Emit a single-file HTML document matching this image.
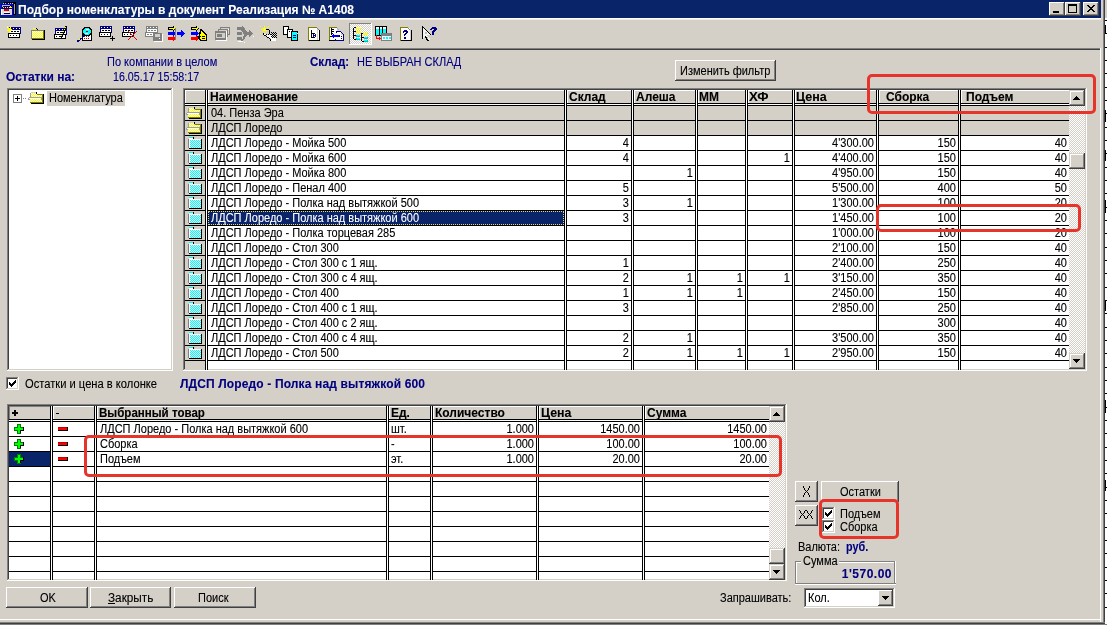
<!DOCTYPE html><html><head><meta charset="utf-8"><style>
html,body{margin:0;padding:0;}
body{width:1107px;height:625px;position:relative;overflow:hidden;background:#d4d0c8;font-family:"Liberation Sans",sans-serif;font-size:11px;}
body>div,body>svg{position:absolute;}
.t{position:absolute;filter:url(#dk);}
</style></head><body>
<div style="left:0px;top:0px;width:1107px;height:625px;background:#d4d0c8;"></div>
<div style="left:1105px;top:0px;width:2px;height:625px;background:#ffffff;"></div>
<div style="left:1105px;top:0px;width:2px;height:18px;background:#d4d0c8;"></div>
<div style="left:1105px;top:20px;width:2px;height:1px;background:#000000;"></div>
<div style="left:1105px;top:33px;width:2px;height:1px;background:#000000;"></div>
<div style="left:1105px;top:47px;width:2px;height:1px;background:#000000;"></div>
<div style="left:1105px;top:60px;width:2px;height:1px;background:#000000;"></div>
<div style="left:1105px;top:73px;width:2px;height:1px;background:#000000;"></div>
<div style="left:1105px;top:87px;width:2px;height:1px;background:#000000;"></div>
<div style="left:1105px;top:100px;width:2px;height:1px;background:#000000;"></div>
<div style="left:1105px;top:113px;width:2px;height:1px;background:#000000;"></div>
<div style="left:1105px;top:127px;width:2px;height:1px;background:#000000;"></div>
<div style="left:1105px;top:140px;width:2px;height:1px;background:#000000;"></div>
<div style="left:1105px;top:153px;width:2px;height:1px;background:#000000;"></div>
<div style="left:1105px;top:167px;width:2px;height:1px;background:#000000;"></div>
<div style="left:1105px;top:180px;width:2px;height:1px;background:#000000;"></div>
<div style="left:1105px;top:193px;width:2px;height:1px;background:#000000;"></div>
<div style="left:1105px;top:207px;width:2px;height:1px;background:#000000;"></div>
<div style="left:1105px;top:220px;width:2px;height:1px;background:#000000;"></div>
<div style="left:1105px;top:233px;width:2px;height:1px;background:#000000;"></div>
<div style="left:1105px;top:247px;width:2px;height:1px;background:#000000;"></div>
<div style="left:1105px;top:260px;width:2px;height:1px;background:#000000;"></div>
<div style="left:1105px;top:273px;width:2px;height:1px;background:#000000;"></div>
<div style="left:1105px;top:287px;width:2px;height:1px;background:#000000;"></div>
<div style="left:1105px;top:300px;width:2px;height:1px;background:#000000;"></div>
<div style="left:1105px;top:313px;width:2px;height:1px;background:#000000;"></div>
<div style="left:1105px;top:327px;width:2px;height:1px;background:#000000;"></div>
<div style="left:1105px;top:340px;width:2px;height:1px;background:#000000;"></div>
<div style="left:1105px;top:353px;width:2px;height:1px;background:#000000;"></div>
<div style="left:1105px;top:367px;width:2px;height:1px;background:#000000;"></div>
<div style="left:1105px;top:380px;width:2px;height:1px;background:#000000;"></div>
<div style="left:1105px;top:393px;width:2px;height:1px;background:#000000;"></div>
<div style="left:1105px;top:407px;width:2px;height:1px;background:#000000;"></div>
<div style="left:1105px;top:420px;width:2px;height:1px;background:#000000;"></div>
<div style="left:1105px;top:433px;width:2px;height:1px;background:#000000;"></div>
<div style="left:1105px;top:447px;width:2px;height:1px;background:#000000;"></div>
<div style="left:1105px;top:460px;width:2px;height:1px;background:#000000;"></div>
<div style="left:1105px;top:473px;width:2px;height:1px;background:#000000;"></div>
<div style="left:1105px;top:487px;width:2px;height:1px;background:#000000;"></div>
<div style="left:1105px;top:500px;width:2px;height:1px;background:#000000;"></div>
<div style="left:1105px;top:513px;width:2px;height:1px;background:#000000;"></div>
<div style="left:1105px;top:527px;width:2px;height:1px;background:#000000;"></div>
<div style="left:1105px;top:540px;width:2px;height:1px;background:#000000;"></div>
<div style="left:1105px;top:553px;width:2px;height:1px;background:#000000;"></div>
<div style="left:1105px;top:567px;width:2px;height:1px;background:#000000;"></div>
<div style="left:1105px;top:580px;width:2px;height:1px;background:#000000;"></div>
<div style="left:1105px;top:593px;width:2px;height:1px;background:#000000;"></div>
<div style="left:1105px;top:607px;width:2px;height:1px;background:#000000;"></div>
<div style="left:1105px;top:25px;width:1px;height:9px;background:#000000;"></div>
<div style="left:1105px;top:110px;width:1px;height:12px;background:#000000;"></div>
<div style="left:1105px;top:150px;width:1px;height:11px;background:#000000;"></div>
<div style="left:1105px;top:200px;width:1px;height:13px;background:#000000;"></div>
<div style="left:1105px;top:300px;width:1px;height:11px;background:#000000;"></div>
<div style="left:1105px;top:400px;width:1px;height:13px;background:#000000;"></div>
<div style="left:1105px;top:480px;width:1px;height:11px;background:#000000;"></div>
<div style="left:1103px;top:0px;width:1px;height:624px;background:#808080;"></div>
<div style="left:1104px;top:0px;width:1px;height:624px;background:#404040;"></div>
<div style="left:0px;top:622px;width:1105px;height:1px;background:#808080;"></div>
<div style="left:0px;top:623px;width:1105px;height:1px;background:#404040;"></div>
<div style="left:0px;top:624px;width:1107px;height:1px;background:#808080;"></div>
<div style="left:0px;top:0px;width:1101px;height:18px;background:#0a246a;"></div>
<div style="left:0px;top:18px;width:1101px;height:1px;background:#ffffff;"></div>
<div style="left:0px;top:19px;width:1101px;height:1px;background:#f0eeea;"></div>
<svg style="left:0px;top:0px" width="18" height="18" shape-rendering="crispEdges"><rect x="4" y="2" width="12" height="13" fill="#000"/><rect x="14" y="4" width="1" height="10" fill="#a0a0a0"/><rect x="3" y="3" width="11" height="1" fill="#000080"/><rect x="3" y="3" width="1" height="1" fill="#c0c0c0"/><rect x="5" y="3" width="1" height="1" fill="#c0c0c0"/><rect x="8" y="3" width="1" height="1" fill="#c0c0c0"/><rect x="10" y="3" width="1" height="1" fill="#c0c0c0"/><rect x="12" y="3" width="1" height="1" fill="#c0c0c0"/><rect x="1" y="4" width="12" height="12" fill="#0000ff"/><rect x="2" y="5" width="10" height="4" fill="#000080"/><rect x="2" y="5" width="8" height="1" fill="#c0c0c0"/><rect x="2" y="6" width="1" height="1" fill="#c0c0c0"/><rect x="3" y="7" width="1" height="1" fill="#ffff00"/><rect x="5" y="7" width="1" height="1" fill="#ffff00"/><rect x="7" y="7" width="1" height="1" fill="#ffff00"/><rect x="9" y="7" width="3" height="1" fill="#ffff00"/><rect x="10" y="6" width="1" height="1" fill="#ffff00"/><rect x="1" y="9" width="11" height="6" fill="#d8d8d8"/><rect x="1" y="9" width="1" height="6" fill="#ffffff"/><rect x="4" y="9" width="5" height="2" fill="#e00000"/><rect x="4" y="12" width="5" height="1" fill="#ffffff"/><rect x="4" y="13" width="6" height="1" fill="#000"/></svg>
<div class="t" style="left:18px;top:4px;font-size:12px;line-height:13px;color:#ffffff;white-space:pre;font-weight:bold;">Подбор номенклатуры в документ Реализация № А1408</div>
<div style="left:1049px;top:2px;width:16px;height:14px;background:#d4d0c8;"></div>
<div style="left:1049px;top:2px;width:16px;height:1px;background:#ffffff;"></div>
<div style="left:1049px;top:2px;width:1px;height:14px;background:#ffffff;"></div>
<div style="left:1049px;top:15px;width:16px;height:1px;background:#404040;"></div>
<div style="left:1064px;top:2px;width:1px;height:14px;background:#404040;"></div>
<div style="left:1050px;top:14px;width:14px;height:1px;background:#808080;"></div>
<div style="left:1063px;top:3px;width:1px;height:12px;background:#808080;"></div>
<div style="left:1065px;top:2px;width:16px;height:14px;background:#d4d0c8;"></div>
<div style="left:1065px;top:2px;width:16px;height:1px;background:#ffffff;"></div>
<div style="left:1065px;top:2px;width:1px;height:14px;background:#ffffff;"></div>
<div style="left:1065px;top:15px;width:16px;height:1px;background:#404040;"></div>
<div style="left:1080px;top:2px;width:1px;height:14px;background:#404040;"></div>
<div style="left:1066px;top:14px;width:14px;height:1px;background:#808080;"></div>
<div style="left:1079px;top:3px;width:1px;height:12px;background:#808080;"></div>
<div style="left:1083px;top:2px;width:16px;height:14px;background:#d4d0c8;"></div>
<div style="left:1083px;top:2px;width:16px;height:1px;background:#ffffff;"></div>
<div style="left:1083px;top:2px;width:1px;height:14px;background:#ffffff;"></div>
<div style="left:1083px;top:15px;width:16px;height:1px;background:#404040;"></div>
<div style="left:1098px;top:2px;width:1px;height:14px;background:#404040;"></div>
<div style="left:1084px;top:14px;width:14px;height:1px;background:#808080;"></div>
<div style="left:1097px;top:3px;width:1px;height:12px;background:#808080;"></div>
<div style="left:1053px;top:11px;width:6px;height:2px;background:#000000;"></div>
<div style="left:1068px;top:4px;width:9px;height:9px;background:#000000;"></div>
<div style="left:1069px;top:6px;width:7px;height:6px;background:#d4d0c8;"></div>
<svg style="left:1083px;top:2px" width="16" height="14" shape-rendering="crispEdges"><path d="M4 3h2v1h1v1h2v-1h1v-1h2v1h-1v1h-1v1h-1v1h1v1h1v1h1v1h-2v-1h-1v-1h-2v1h-1v1h-2v-1h1v-1h1v-1h1v-1h-1v-1h-1v-1h-1z" fill="#000"/></svg>
<div style="left:0px;top:48px;width:1100px;height:1px;background:#808080;"></div>
<div style="left:0px;top:49px;width:1100px;height:1px;background:#404040;"></div>
<div style="left:1100px;top:48px;width:1px;height:574px;background:#ffffff;"></div>
<div style="left:0px;top:619px;width:1101px;height:1px;background:#ffffff;"></div>
<div class="t" style="left:107px;top:56px;font-size:12px;line-height:13px;color:#000080;white-space:pre;transform:scaleX(0.9167);transform-origin:0 0;">По компании в целом</div>
<div class="t" style="left:113px;top:71px;font-size:12px;line-height:13px;color:#000080;white-space:pre;transform:scaleX(0.89);transform-origin:0 0;">16.05.17 15:58:17</div>
<div class="t" style="left:6px;top:71px;font-size:12px;line-height:13px;color:#000080;white-space:pre;font-weight:bold;">Остатки на:</div>
<div class="t" style="left:310px;top:56px;font-size:12px;line-height:13px;color:#000080;white-space:pre;font-weight:bold;transform:scaleX(0.96);transform-origin:0 0;">Склад:</div>
<div class="t" style="left:357px;top:56px;font-size:12px;line-height:13px;color:#000080;white-space:pre;transform:scaleX(0.9167);transform-origin:0 0;">НЕ ВЫБРАН СКЛАД</div>
<div style="left:675px;top:60px;width:101px;height:21px;background:#d4d0c8;"></div>
<div style="left:675px;top:60px;width:101px;height:1px;background:#ffffff;"></div>
<div style="left:675px;top:60px;width:1px;height:21px;background:#ffffff;"></div>
<div style="left:675px;top:80px;width:101px;height:1px;background:#404040;"></div>
<div style="left:775px;top:60px;width:1px;height:21px;background:#404040;"></div>
<div style="left:676px;top:79px;width:99px;height:1px;background:#808080;"></div>
<div style="left:774px;top:61px;width:1px;height:19px;background:#808080;"></div>
<div class="t" style="left:680px;top:65px;font-size:12px;line-height:13px;color:#000;white-space:pre;transform:scaleX(0.9167);transform-origin:0 0;">Изменить фильтр</div>
<div style="left:7px;top:88px;width:166px;height:283px;background:#ffffff;"></div>
<div style="left:7px;top:88px;width:166px;height:1px;background:#808080;"></div>
<div style="left:7px;top:88px;width:1px;height:283px;background:#808080;"></div>
<div style="left:8px;top:89px;width:164px;height:1px;background:#404040;"></div>
<div style="left:8px;top:89px;width:1px;height:281px;background:#404040;"></div>
<div style="left:7px;top:370px;width:166px;height:1px;background:#ffffff;"></div>
<div style="left:172px;top:88px;width:1px;height:283px;background:#ffffff;"></div>
<div style="left:8px;top:369px;width:164px;height:1px;background:#d4d0c8;"></div>
<div style="left:171px;top:89px;width:1px;height:281px;background:#d4d0c8;"></div>
<div style="left:13px;top:94px;width:9px;height:9px;background:#808080;"></div>
<div style="left:14px;top:95px;width:7px;height:7px;background:#ffffff;"></div>
<div style="left:15px;top:98px;width:5px;height:1px;background:#000000;"></div>
<div style="left:17px;top:96px;width:1px;height:5px;background:#000000;"></div>
<div style="left:23px;top:98px;width:1px;height:1px;background:#808080;"></div>
<div style="left:25px;top:98px;width:1px;height:1px;background:#808080;"></div>
<div style="left:47px;top:91px;width:78px;height:15px;background:#d4d0c8;"></div>
<div class="t" style="left:49px;top:92px;font-size:12px;line-height:13px;color:#000;white-space:pre;transform:scaleX(0.9167);transform-origin:0 0;">Номенклатура</div>
<svg width="0" height="0" style="position:absolute;left:0;top:0">
<defs>
<filter id="dk" x="-2%" y="-10%" width="104%" height="120%"><feComponentTransfer><feFuncA type="gamma" amplitude="1" exponent="0.8" offset="0"/></feComponentTransfer></filter>
<pattern id="chk" width="2" height="2" patternUnits="userSpaceOnUse"><rect width="2" height="2" fill="#d4d0c8"/><rect width="1" height="1" fill="#ffffff"/><rect x="1" y="1" width="1" height="1" fill="#ffffff"/></pattern>
<pattern id="cy" width="2" height="2" patternUnits="userSpaceOnUse"><rect width="2" height="2" fill="#f0e8ea"/><rect width="1" height="1" fill="#00ffff"/><rect x="1" y="1" width="1" height="1" fill="#00ffff"/></pattern>
<pattern id="yl" width="2" height="2" patternUnits="userSpaceOnUse"><rect width="2" height="2" fill="#ffffff"/><rect width="1" height="1" fill="#ffff00"/><rect x="1" y="1" width="1" height="1" fill="#ffff00"/></pattern>
<symbol id="fc" viewBox="0 0 16 14">
<rect x="3" y="1" width="4" height="1" fill="#00ffff"/><rect x="7" y="1" width="1" height="2" fill="#000"/>
<rect x="2" y="3" width="1" height="9" fill="#808080"/>
<rect x="3" y="2" width="4" height="1" fill="#ffffff"/>
<rect x="3" y="3" width="12" height="1" fill="#ffffff"/>
<rect x="3" y="4" width="1" height="8" fill="#ffffff"/>
<rect x="4" y="4" width="11" height="8" fill="url(#cy)"/>
<rect x="15" y="3" width="1" height="10" fill="#000"/>
<rect x="3" y="12" width="13" height="1" fill="#000"/>
</symbol>
<symbol id="fy" viewBox="0 0 16 14">
<rect x="3" y="1" width="5" height="1" fill="#d0d0d0"/><rect x="8" y="1" width="1" height="1" fill="#000"/>
<rect x="2" y="2" width="1" height="4" fill="#a0a0a0"/>
<rect x="3" y="2" width="5" height="4" fill="url(#yl)"/>
<rect x="8" y="2" width="1" height="1" fill="#000"/>
<rect x="9" y="3" width="6" height="1" fill="#808000"/>
<rect x="8" y="4" width="7" height="2" fill="url(#yl)"/>
<rect x="15" y="3" width="1" height="10" fill="#000"/>
<rect x="14" y="4" width="1" height="8" fill="#808000"/>
<rect x="1" y="6" width="12" height="1" fill="#a0a0a0"/>
<rect x="1" y="7" width="12" height="1" fill="#ffffff"/>
<rect x="0" y="7" width="1" height="2" fill="#a0a0a0"/>
<rect x="1" y="8" width="1" height="1" fill="#a0a0a0"/>
<rect x="2" y="8" width="11" height="3" fill="url(#yl)"/>
<rect x="13" y="7" width="1" height="2" fill="#a0a0a0"/>
<rect x="13" y="9" width="1" height="2" fill="url(#yl)"/>
<rect x="12" y="6" width="2" height="1" fill="#a0a0a0"/>
<rect x="2" y="11" width="12" height="1" fill="#808000"/>
<rect x="3" y="12" width="13" height="1" fill="#000"/>
</symbol>
<symbol id="gp" viewBox="0 0 10 10">
<path d="M3 0h4v3h3v4h-3v3h-4v-3h-3v-4h3z" fill="#008000"/>
<path d="M4 1h2v3h3v2h-3v3h-2v-3h-3v-2h3z" fill="#00ff00"/>
<path d="M9 3h1v4h-3v3h-1v-1h0v-3h3z" fill="#000" opacity="0"/>
<rect x="9" y="3" width="1" height="4" fill="#000"/><rect x="7" y="6" width="3" height="1" fill="#000"/>
<rect x="6" y="6" width="1" height="4" fill="#000"/><rect x="3" y="9" width="4" height="1" fill="#008000"/>
</symbol>
<symbol id="rm" viewBox="0 0 10 4">
<rect x="0" y="0" width="10" height="4" fill="#ff0000"/>
<rect x="9" y="0" width="1" height="4" fill="#000"/><rect x="0" y="3" width="10" height="1" fill="#000"/>
<rect x="0" y="0" width="9" height="1" fill="#c00000"/>
</symbol>
</defs></svg>
<svg style="position:absolute;left:0;top:0" width="450" height="48" shape-rendering="crispEdges"><rect x="9" y="27" width="12" height="7" fill="#000080"/><rect x="10" y="28" width="1" height="1" fill="#ffffff"/><rect x="13" y="28" width="1" height="1" fill="#ffffff"/><rect x="16" y="28" width="1" height="1" fill="#ffffff"/><rect x="19" y="28" width="1" height="1" fill="#ffffff"/><rect x="10" y="30" width="10" height="3" fill="#ffffff"/><rect x="11" y="31" width="2" height="1" fill="#000000"/><rect x="14" y="31" width="2" height="1" fill="#000000"/><rect x="17" y="31" width="2" height="1" fill="#000000"/><rect x="8" y="33" width="12" height="5" fill="#000000"/><rect x="9" y="34" width="10" height="3" fill="#ffffff"/><rect x="10" y="35" width="1" height="1" fill="#000000"/><rect x="13" y="35" width="1" height="1" fill="#000000"/><rect x="16" y="35" width="1" height="1" fill="#000000"/><rect x="7" y="26" width="1" height="1" fill="#ffff00"/><rect x="9" y="26" width="1" height="1" fill="#ffff00"/><rect x="11" y="26" width="1" height="1" fill="#ffff00"/><rect x="8" y="28" width="3" height="3" fill="#ffff00"/><rect x="7" y="30" width="1" height="1" fill="#ffff00"/><rect x="11" y="29" width="1" height="1" fill="#ffff00"/><rect x="9" y="31" width="1" height="2" fill="#ffff00"/><rect x="7" y="27" width="1" height="1" fill="#ffffff"/><rect x="10" y="27" width="1" height="1" fill="#ffffff"/><rect x="33" y="28" width="3" height="1" fill="#ffff00"/><rect x="36" y="28" width="1" height="1" fill="#000"/><rect x="37" y="29" width="1" height="1" fill="#000"/><rect x="31" y="30" width="12" height="1" fill="#808080"/><rect x="31" y="30" width="1" height="9" fill="#808080"/><rect x="32" y="31" width="11" height="7" fill="#ffffff"/><rect x="33" y="31" width="1" height="1" fill="#ffff00"/><rect x="35" y="31" width="1" height="1" fill="#ffff00"/><rect x="37" y="31" width="1" height="1" fill="#ffff00"/><rect x="39" y="31" width="1" height="1" fill="#ffff00"/><rect x="41" y="31" width="1" height="1" fill="#ffff00"/><rect x="32" y="32" width="1" height="1" fill="#ffff00"/><rect x="34" y="32" width="1" height="1" fill="#ffff00"/><rect x="36" y="32" width="1" height="1" fill="#ffff00"/><rect x="38" y="32" width="1" height="1" fill="#ffff00"/><rect x="40" y="32" width="1" height="1" fill="#ffff00"/><rect x="42" y="32" width="1" height="1" fill="#ffff00"/><rect x="33" y="33" width="1" height="1" fill="#ffff00"/><rect x="35" y="33" width="1" height="1" fill="#ffff00"/><rect x="37" y="33" width="1" height="1" fill="#ffff00"/><rect x="39" y="33" width="1" height="1" fill="#ffff00"/><rect x="41" y="33" width="1" height="1" fill="#ffff00"/><rect x="32" y="34" width="1" height="1" fill="#ffff00"/><rect x="34" y="34" width="1" height="1" fill="#ffff00"/><rect x="36" y="34" width="1" height="1" fill="#ffff00"/><rect x="38" y="34" width="1" height="1" fill="#ffff00"/><rect x="40" y="34" width="1" height="1" fill="#ffff00"/><rect x="42" y="34" width="1" height="1" fill="#ffff00"/><rect x="33" y="35" width="1" height="1" fill="#ffff00"/><rect x="35" y="35" width="1" height="1" fill="#ffff00"/><rect x="37" y="35" width="1" height="1" fill="#ffff00"/><rect x="39" y="35" width="1" height="1" fill="#ffff00"/><rect x="41" y="35" width="1" height="1" fill="#ffff00"/><rect x="32" y="36" width="1" height="1" fill="#ffff00"/><rect x="34" y="36" width="1" height="1" fill="#ffff00"/><rect x="36" y="36" width="1" height="1" fill="#ffff00"/><rect x="38" y="36" width="1" height="1" fill="#ffff00"/><rect x="40" y="36" width="1" height="1" fill="#ffff00"/><rect x="42" y="36" width="1" height="1" fill="#ffff00"/><rect x="33" y="37" width="1" height="1" fill="#ffff00"/><rect x="35" y="37" width="1" height="1" fill="#ffff00"/><rect x="37" y="37" width="1" height="1" fill="#ffff00"/><rect x="39" y="37" width="1" height="1" fill="#ffff00"/><rect x="41" y="37" width="1" height="1" fill="#ffff00"/><rect x="43" y="30" width="1" height="9" fill="#808000"/><rect x="31" y="38" width="13" height="1" fill="#808000"/><rect x="44" y="30" width="1" height="10" fill="#000"/><rect x="32" y="39" width="13" height="1" fill="#000"/><rect x="55" y="28" width="12" height="7" fill="#000080"/><rect x="56" y="29" width="1" height="1" fill="#ffffff"/><rect x="59" y="29" width="1" height="1" fill="#ffffff"/><rect x="62" y="29" width="1" height="1" fill="#ffffff"/><rect x="65" y="29" width="1" height="1" fill="#ffffff"/><rect x="56" y="31" width="10" height="3" fill="#ffffff"/><rect x="57" y="32" width="2" height="1" fill="#000000"/><rect x="60" y="32" width="2" height="1" fill="#000000"/><rect x="63" y="32" width="2" height="1" fill="#000000"/><rect x="54" y="34" width="12" height="5" fill="#000000"/><rect x="55" y="35" width="10" height="3" fill="#ffffff"/><rect x="56" y="36" width="1" height="1" fill="#000000"/><rect x="59" y="36" width="1" height="1" fill="#000000"/><rect x="62" y="36" width="1" height="1" fill="#000000"/><path d="M65 26h2v2h-1v2h-1v2h-1v2h-1v2h-1v2h-1v-1h-1v-1h1v-2h1v-2h1v-2h1v-2h1z" fill="#000"/><path d="M65 27h1v1h-1v2h-1v2h-1v2h-1v2h-1v-1h1v-2h1v-2h1v-2h1z" fill="#ffff00"/><rect x="82" y="34" width="10" height="7" fill="#000"/><rect x="83" y="35" width="8" height="5" fill="#ffffff"/><rect x="84" y="36" width="1" height="1" fill="#c00000"/><rect x="86" y="36" width="1" height="1" fill="#c00000"/><rect x="88" y="36" width="1" height="1" fill="#c00000"/><rect x="84" y="38" width="1" height="1" fill="#c00000"/><rect x="86" y="38" width="1" height="1" fill="#c00000"/><rect x="88" y="38" width="1" height="1" fill="#c00000"/><path d="M84 27h6v1h1v1h1v5h-1v1h-1v1h-6v-1h-1v-1h-1v-5h1v-1h1z" fill="#000"/><path d="M85 28h4v1h1v1h1v3h-1v1h-1v1h-4v-1h-1v-1h-1v-3h1v-1h1z" fill="#00ffff"/><rect x="86" y="29" width="3" height="1" fill="#ffffff"/><rect x="86" y="31" width="2" height="1" fill="#c00000"/><rect x="85" y="33" width="3" height="1" fill="#ffffff"/><path d="M77 40h2v-1h1v-1h1v-1h1v-1h1v-1h1v2h-1v1h-1v1h-1v1h-1v1h-1v1h-2z" fill="#000080"/><rect x="79" y="39" width="1" height="1" fill="#ffff00"/><rect x="81" y="37" width="1" height="1" fill="#ffff00"/><rect x="100" y="26" width="12" height="7" fill="#000080"/><rect x="101" y="27" width="1" height="1" fill="#ffffff"/><rect x="104" y="27" width="1" height="1" fill="#ffffff"/><rect x="107" y="27" width="1" height="1" fill="#ffffff"/><rect x="110" y="27" width="1" height="1" fill="#ffffff"/><rect x="101" y="29" width="10" height="3" fill="#ffffff"/><rect x="102" y="30" width="2" height="1" fill="#000000"/><rect x="105" y="30" width="2" height="1" fill="#000000"/><rect x="108" y="30" width="2" height="1" fill="#000000"/><rect x="99" y="32" width="12" height="5" fill="#000000"/><rect x="100" y="33" width="10" height="3" fill="#ffffff"/><rect x="101" y="34" width="1" height="1" fill="#000000"/><rect x="104" y="34" width="1" height="1" fill="#000000"/><rect x="107" y="34" width="1" height="1" fill="#000000"/><rect x="110" y="38" width="5" height="1" fill="#000"/><rect x="112" y="36" width="1" height="5" fill="#000"/><rect x="123" y="26" width="12" height="7" fill="#000080"/><rect x="124" y="27" width="1" height="1" fill="#ffffff"/><rect x="127" y="27" width="1" height="1" fill="#ffffff"/><rect x="130" y="27" width="1" height="1" fill="#ffffff"/><rect x="133" y="27" width="1" height="1" fill="#ffffff"/><rect x="124" y="29" width="10" height="3" fill="#ffffff"/><rect x="125" y="30" width="2" height="1" fill="#000000"/><rect x="128" y="30" width="2" height="1" fill="#000000"/><rect x="131" y="30" width="2" height="1" fill="#000000"/><rect x="122" y="32" width="12" height="5" fill="#000000"/><rect x="123" y="33" width="10" height="3" fill="#ffffff"/><rect x="124" y="34" width="1" height="1" fill="#000000"/><rect x="127" y="34" width="1" height="1" fill="#000000"/><rect x="130" y="34" width="1" height="1" fill="#000000"/><path d="M128 31h1v1h1v1h1v1h1v1h1v-1h1v-1h1v-1h1v-1h1v1h-1v1h-1v1h-1v1h-1v1h1v1h1v1h1v1h1v1h-1v-1h-1v-1h-1v-1h-1v-1h-1v1h-1v1h-1v1h-1v1h-1v-1h1v-1h1v-1h1v-1h1v-1h-1v-1h-1v-1h-1v-1h-1z" fill="#e00000"/><rect x="146" y="26" width="12" height="7" fill="#808080"/><rect x="147" y="27" width="1" height="1" fill="#ffffff"/><rect x="150" y="27" width="1" height="1" fill="#ffffff"/><rect x="153" y="27" width="1" height="1" fill="#ffffff"/><rect x="156" y="27" width="1" height="1" fill="#ffffff"/><rect x="147" y="29" width="10" height="3" fill="#ffffff"/><rect x="148" y="30" width="2" height="1" fill="#808080"/><rect x="151" y="30" width="2" height="1" fill="#808080"/><rect x="154" y="30" width="2" height="1" fill="#808080"/><rect x="145" y="32" width="12" height="5" fill="#808080"/><rect x="146" y="33" width="10" height="3" fill="#ffffff"/><rect x="147" y="34" width="2" height="1" fill="#808080"/><rect x="150" y="34" width="2" height="1" fill="#808080"/><rect x="153" y="34" width="2" height="1" fill="#808080"/><rect x="154" y="34" width="9" height="8" fill="#ffffff"/><rect x="153" y="33" width="9" height="8" fill="#808080"/><rect x="155" y="34" width="5" height="3" fill="#d4d0c8"/><rect x="159" y="38" width="1" height="1" fill="#ffffff"/><path d="M168 27h5v-1h1v1h1v1h1v1h-1v1h-1v1h-1v-1h-5z" fill="#000"/><path d="M169 28h5v-1h1v1h0v1h-1v1h-1v-1h-4z" fill="#ffff00"/><path d="M168 32h5v-1h1v1h1v1h1v1h-1v1h-1v1h-1v-1h-5z" fill="#0000ff"/><path d="M169 33h5v-1h1v1h0v1h-1v1h-1v-1h-4z" fill="#0000ff"/><path d="M168 37h5v-1h1v1h1v1h1v1h-1v1h-1v1h-1v-1h-5z" fill="#ff0000"/><path d="M169 38h5v-1h1v1h0v1h-1v1h-1v-1h-4z" fill="#ff0000"/><rect x="175" y="28" width="1" height="12" fill="#808080"/><path d="M177 32h4v-2h1v1h1v1h1v1h1v1h-1v1h-1v1h-1v1h-1v-2h-4z" fill="#0000ff"/><path d="M191 27h5v-1h1v1h1v1h1v1h-1v1h-1v1h-1v-1h-5z" fill="#000"/><path d="M192 28h5v-1h1v1h0v1h-1v1h-1v-1h-4z" fill="#ffff00"/><path d="M191 32h5v-1h1v1h1v1h1v1h-1v1h-1v1h-1v-1h-5z" fill="#0000ff"/><path d="M192 33h5v-1h1v1h0v1h-1v1h-1v-1h-4z" fill="#0000ff"/><path d="M191 37h5v-1h1v1h1v1h1v1h-1v1h-1v1h-1v-1h-5z" fill="#ff0000"/><path d="M192 38h5v-1h1v1h0v1h-1v1h-1v-1h-4z" fill="#ff0000"/><path d="M200 29h2v1h1v1h1v1h1v1h1v1h1v7h-7v-1h-1v-1h-1v-2h-1v-1h2v-4h1z" fill="#000"/><path d="M201 31h1v1h1v1h1v1h1v1h1v5h-5v-1h-1v-2h1v-1h-1v-2h1z" fill="#ffff00"/><rect x="202" y="36" width="3" height="1" fill="#000"/><rect x="202" y="38" width="3" height="1" fill="#000"/><rect x="220" y="27" width="10" height="8" fill="#808080"/><rect x="221" y="28" width="8" height="6" fill="#d4d0c8"/><rect x="221" y="29" width="8" height="1" fill="#ffffff"/><rect x="218" y="29" width="10" height="8" fill="#808080"/><rect x="219" y="30" width="8" height="6" fill="#d4d0c8"/><rect x="219" y="31" width="8" height="1" fill="#ffffff"/><rect x="215" y="31" width="11" height="9" fill="#808080"/><rect x="216" y="33" width="9" height="5" fill="#d4d0c8"/><rect x="217" y="34" width="5" height="3" fill="#808080"/><rect x="216" y="40" width="11" height="1" fill="#ffffff"/><rect x="226" y="32" width="1" height="9" fill="#ffffff"/><rect x="237" y="27" width="5" height="3" fill="#808080"/><rect x="237" y="32" width="5" height="3" fill="#808080"/><rect x="237" y="37" width="5" height="3" fill="#808080"/><path d="M242 26h1v1h1v1h1v2h1v1h1v1h2v-2h1v1h1v1h1v1h1v1h-1v1h-1v1h-1v1h-1v-2h-2v1h-1v1h-1v2h-1v1h-1v1h-1v1h-1v-2h1v-1h1v-1h0v-2h1v-2h-1v-2h-1v-1h-1z" fill="#808080"/><rect x="238" y="41" width="5" height="1" fill="#ffffff"/><rect x="244" y="42" width="1" height="1" fill="#ffffff"/><rect x="253" y="36" width="1" height="1" fill="#ffffff"/><rect x="260" y="26" width="1" height="1" fill="#ffff00"/><rect x="264" y="26" width="1" height="1" fill="#ffff00"/><rect x="268" y="26" width="1" height="1" fill="#ffff00"/><rect x="260" y="33" width="1" height="1" fill="#ffff00"/><rect x="264" y="32" width="1" height="1" fill="#ffff00"/><rect x="261" y="29" width="1" height="1" fill="#ffff00"/><rect x="267" y="27" width="1" height="1" fill="#ffff00"/><rect x="262" y="31" width="1" height="1" fill="#ffff00"/><rect x="264" y="27" width="1" height="1" fill="#ffff00"/><rect x="266" y="30" width="1" height="1" fill="#ffff00"/><rect x="262" y="28" width="1" height="1" fill="#ffff00"/><rect x="263" y="28" width="3" height="3" fill="#ffff00"/><rect x="264" y="29" width="1" height="1" fill="#ffffff"/><rect x="261" y="27" width="1" height="1" fill="#c0c0ff"/><rect x="263" y="26" width="1" height="1" fill="#c0c0ff"/><rect x="266" y="29" width="3" height="1" fill="#000"/><rect x="269" y="30" width="1" height="4" fill="#000"/><rect x="268" y="34" width="1" height="1" fill="#000"/><rect x="263" y="33" width="1" height="2" fill="#000"/><rect x="264" y="35" width="2" height="1" fill="#000"/><rect x="266" y="34" width="1" height="1" fill="#000"/><rect x="266" y="36" width="1" height="1" fill="#000"/><rect x="267" y="37" width="2" height="1" fill="#000"/><rect x="269" y="38" width="1" height="1" fill="#000"/><rect x="270" y="39" width="1" height="2" fill="#000"/><rect x="272" y="39" width="1" height="1" fill="#000"/><rect x="273" y="40" width="1" height="1" fill="#000"/><rect x="264" y="34" width="2" height="1" fill="#ffffff"/><rect x="267" y="35" width="5" height="2" fill="#ffffff"/><rect x="269" y="37" width="3" height="1" fill="#ffffff"/><rect x="271" y="38" width="5" height="3" fill="#ffffff"/><rect x="271" y="32" width="1" height="1" fill="#000"/><rect x="273" y="32" width="1" height="1" fill="#000"/><rect x="275" y="32" width="1" height="1" fill="#000"/><rect x="272" y="33" width="1" height="1" fill="#000"/><rect x="274" y="33" width="1" height="1" fill="#000"/><rect x="276" y="33" width="1" height="1" fill="#000"/><rect x="271" y="34" width="1" height="1" fill="#000"/><rect x="273" y="34" width="1" height="1" fill="#000"/><rect x="275" y="34" width="1" height="1" fill="#000"/><rect x="272" y="35" width="1" height="1" fill="#000"/><rect x="274" y="35" width="1" height="1" fill="#000"/><rect x="276" y="35" width="1" height="1" fill="#000"/><rect x="271" y="36" width="1" height="1" fill="#000"/><rect x="273" y="36" width="1" height="1" fill="#000"/><rect x="275" y="36" width="1" height="1" fill="#000"/><rect x="272" y="37" width="1" height="1" fill="#000"/><rect x="274" y="37" width="1" height="1" fill="#000"/><rect x="276" y="37" width="1" height="1" fill="#000"/><rect x="270" y="34" width="2" height="1" fill="#000"/><rect x="283" y="26" width="6" height="9" fill="#000"/><rect x="284" y="27" width="4" height="7" fill="#ffffff"/><rect x="287" y="29" width="6" height="9" fill="#000"/><rect x="288" y="30" width="4" height="7" fill="#ffffff"/><rect x="289" y="31" width="1" height="1" fill="#000"/><rect x="291" y="31" width="7" height="10" fill="#000"/><rect x="292" y="32" width="5" height="8" fill="#00ffff"/><rect x="297" y="33" width="1" height="1" fill="#ffffff"/><rect x="293" y="35" width="3" height="1" fill="#000080"/><rect x="293" y="37" width="3" height="1" fill="#000080"/><rect x="308" y="27" width="9" height="1" fill="#808000"/><rect x="308" y="27" width="1" height="14" fill="#808000"/><rect x="309" y="28" width="8" height="12" fill="#ffffff"/><rect x="317" y="28" width="1" height="1" fill="#808080"/><rect x="318" y="29" width="1" height="1" fill="#808080"/><rect x="319" y="30" width="1" height="11" fill="#000"/><rect x="309" y="40" width="11" height="1" fill="#000"/><rect x="318" y="30" width="1" height="10" fill="#ffffff"/><rect x="311" y="30" width="1" height="8" fill="#000"/><rect x="311" y="37" width="4" height="1" fill="#000"/><rect x="311" y="33" width="4" height="1" fill="#000"/><rect x="313" y="34" width="1" height="3" fill="#000080"/><rect x="313" y="35" width="3" height="1" fill="#000080"/><rect x="315" y="34" width="1" height="1" fill="#000080"/><rect x="315" y="36" width="1" height="1" fill="#000080"/><rect x="329" y="27" width="8" height="1" fill="#808000"/><rect x="329" y="27" width="1" height="14" fill="#808000"/><rect x="330" y="28" width="7" height="12" fill="#ffffff"/><rect x="337" y="28" width="1" height="1" fill="#a0a0a0"/><rect x="338" y="29" width="1" height="1" fill="#a0a0a0"/><rect x="331" y="28" width="1" height="7" fill="#000"/><rect x="332" y="29" width="2" height="1" fill="#000"/><rect x="332" y="31" width="2" height="1" fill="#000"/><rect x="332" y="33" width="1" height="1" fill="#000"/><rect x="329" y="40" width="7" height="1" fill="#000"/><rect x="336" y="31" width="5" height="1" fill="#000080"/><rect x="341" y="32" width="1" height="1" fill="#000080"/><rect x="342" y="33" width="1" height="1" fill="#000080"/><rect x="343" y="34" width="1" height="7" fill="#000080"/><rect x="336" y="31" width="1" height="2" fill="#000080"/><rect x="335" y="39" width="1" height="2" fill="#000080"/><rect x="335" y="40" width="9" height="1" fill="#000080"/><rect x="337" y="32" width="4" height="3" fill="#ffffff"/><rect x="336" y="35" width="7" height="5" fill="#ffffff"/><rect x="341" y="36" width="1" height="1" fill="#000"/><rect x="341" y="38" width="1" height="1" fill="#000"/><rect x="330" y="36" width="9" height="1" fill="#000"/><rect x="339" y="35" width="1" height="2" fill="#000"/><path d="M333 34h1v1h5v2h-5v1h-1v-1h-1v-2h1z" fill="#0000ff"/><rect x="349" y="23" width="23" height="22" fill="#ffffff"/><rect x="349" y="23" width="22" height="21" fill="#808080"/><rect x="350" y="24" width="21" height="20" fill="#ffffff"/><rect x="350" y="24" width="21" height="20" fill="url(#chk)"/><rect x="353" y="28" width="1" height="11" fill="#000"/><rect x="354" y="27" width="2" height="1" fill="#000"/><rect x="354" y="31" width="2" height="1" fill="#000"/><rect x="354" y="35" width="2" height="1" fill="#000"/><rect x="354" y="39" width="2" height="1" fill="#000"/><rect x="356" y="27" width="5" height="2" fill="#ffff00"/><rect x="356" y="31" width="5" height="2" fill="#ffff00"/><rect x="356" y="35" width="4" height="2" fill="#00c0c0"/><rect x="356" y="38" width="4" height="2" fill="#00c0c0"/><rect x="357" y="27" width="4" height="1" fill="#ffff80"/><rect x="357" y="35" width="3" height="1" fill="#00ffff"/><rect x="357" y="38" width="3" height="1" fill="#00ffff"/><rect x="361" y="33" width="1" height="1" fill="#000"/><rect x="361" y="34" width="1" height="7" fill="#000"/><rect x="362" y="33" width="1" height="1" fill="#000"/><rect x="362" y="37" width="2" height="1" fill="#000"/><rect x="362" y="41" width="2" height="1" fill="#000"/><rect x="363" y="33" width="5" height="2" fill="#ffff00"/><rect x="364" y="37" width="4" height="2" fill="#00c0c0"/><rect x="364" y="40" width="4" height="2" fill="#00c0c0"/><rect x="364" y="37" width="3" height="1" fill="#00ffff"/><rect x="364" y="40" width="3" height="1" fill="#00ffff"/><rect x="375" y="26" width="12" height="10" fill="#000"/><rect x="376" y="27" width="10" height="2" fill="#ffffff"/><rect x="376" y="29" width="10" height="6" fill="#00ffff"/><rect x="379" y="27" width="1" height="8" fill="#000"/><rect x="382" y="27" width="1" height="8" fill="#000"/><rect x="381" y="33" width="11" height="8" fill="#808080"/><rect x="382" y="36" width="9" height="4" fill="#ffffff"/><rect x="383" y="37" width="2" height="2" fill="#00ffff"/><rect x="386" y="37" width="2" height="2" fill="#00ffff"/><rect x="389" y="37" width="2" height="2" fill="#00ffff"/><rect x="376" y="35" width="1" height="4" fill="#ff0000"/><rect x="376" y="38" width="5" height="1" fill="#ff0000"/><rect x="379" y="37" width="1" height="3" fill="#ff0000"/><rect x="400" y="27" width="8" height="1" fill="#808000"/><rect x="400" y="27" width="1" height="14" fill="#808000"/><rect x="401" y="28" width="9" height="12" fill="#ffffff"/><rect x="408" y="28" width="1" height="1" fill="#808080"/><rect x="409" y="29" width="1" height="1" fill="#808080"/><rect x="411" y="30" width="1" height="11" fill="#000"/><rect x="401" y="40" width="11" height="1" fill="#000"/><path d="M403 31h1v-1h3v1h1v2h-1v1h-1v1h-1v1h-1v-2h1v-1h1v-1h-2v1h-1z" fill="#000080"/><rect x="404" y="37" width="2" height="2" fill="#000080"/><path d="M422 26h1v1h1v1h1v1h1v1h1v1h1v1h1v1h1v1h1v1h-4v1h1v1h1v1h1v2h-1v1h-2v-1h-1v-2h-1v-1h-1v1h-1v1h-1z" fill="#000"/><path d="M423 28h1v1h1v1h1v1h1v1h1v1h1v1h1v1h-3v1h1v1h1v1h1v2h-2v-2h-1v-1h-1v-1h-1v1h-1v1h-1z" fill="#f4f4f4"/><rect x="425" y="32" width="2" height="2" fill="#c0c0c0"/><rect x="427" y="37" width="1" height="2" fill="#c0c0c0"/><path d="M431 28h1v-1h4v1h1v2h-1v1h-1v1h-1v1h-2v-2h1v-1h1v-1h-2v1h-2z" fill="#000080"/><rect x="432" y="33" width="2" height="2" fill="#000080"/></svg>
<svg style="left:28px;top:91px" width="16px" height="14px" shape-rendering="crispEdges"><use href="#fy"/></svg>
<div style="left:183px;top:88px;width:904px;height:283px;background:#ffffff;"></div>
<div style="left:183px;top:88px;width:904px;height:1px;background:#808080;"></div>
<div style="left:183px;top:88px;width:1px;height:283px;background:#808080;"></div>
<div style="left:184px;top:89px;width:902px;height:1px;background:#404040;"></div>
<div style="left:184px;top:89px;width:1px;height:281px;background:#404040;"></div>
<div style="left:183px;top:370px;width:904px;height:1px;background:#ffffff;"></div>
<div style="left:1086px;top:88px;width:1px;height:283px;background:#ffffff;"></div>
<div style="left:184px;top:369px;width:902px;height:1px;background:#d4d0c8;"></div>
<div style="left:1085px;top:89px;width:1px;height:281px;background:#d4d0c8;"></div>
<div style="left:185px;top:90px;width:20px;height:13px;background:#d4d0c8;"></div>
<div style="left:185px;top:90px;width:20px;height:1px;background:#ffffff;"></div>
<div style="left:185px;top:90px;width:1px;height:13px;background:#ffffff;"></div>
<div style="left:208px;top:90px;width:356px;height:13px;background:#d4d0c8;"></div>
<div style="left:208px;top:90px;width:356px;height:1px;background:#ffffff;"></div>
<div style="left:208px;top:90px;width:1px;height:13px;background:#ffffff;"></div>
<div style="left:567px;top:90px;width:64px;height:13px;background:#d4d0c8;"></div>
<div style="left:567px;top:90px;width:64px;height:1px;background:#ffffff;"></div>
<div style="left:567px;top:90px;width:1px;height:13px;background:#ffffff;"></div>
<div style="left:634px;top:90px;width:61px;height:13px;background:#d4d0c8;"></div>
<div style="left:634px;top:90px;width:61px;height:1px;background:#ffffff;"></div>
<div style="left:634px;top:90px;width:1px;height:13px;background:#ffffff;"></div>
<div style="left:698px;top:90px;width:47px;height:13px;background:#d4d0c8;"></div>
<div style="left:698px;top:90px;width:47px;height:1px;background:#ffffff;"></div>
<div style="left:698px;top:90px;width:1px;height:13px;background:#ffffff;"></div>
<div style="left:748px;top:90px;width:44px;height:13px;background:#d4d0c8;"></div>
<div style="left:748px;top:90px;width:44px;height:1px;background:#ffffff;"></div>
<div style="left:748px;top:90px;width:1px;height:13px;background:#ffffff;"></div>
<div style="left:795px;top:90px;width:81px;height:13px;background:#d4d0c8;"></div>
<div style="left:795px;top:90px;width:81px;height:1px;background:#ffffff;"></div>
<div style="left:795px;top:90px;width:1px;height:13px;background:#ffffff;"></div>
<div style="left:879px;top:90px;width:79px;height:13px;background:#d4d0c8;"></div>
<div style="left:879px;top:90px;width:79px;height:1px;background:#ffffff;"></div>
<div style="left:879px;top:90px;width:1px;height:13px;background:#ffffff;"></div>
<div style="left:961px;top:90px;width:108px;height:13px;background:#d4d0c8;"></div>
<div style="left:961px;top:90px;width:108px;height:1px;background:#ffffff;"></div>
<div style="left:961px;top:90px;width:1px;height:13px;background:#ffffff;"></div>
<div style="left:185px;top:103px;width:884px;height:1px;background:#000000;"></div>
<div style="left:185px;top:104px;width:884px;height:1px;background:#ffffff;"></div>
<div style="left:185px;top:105px;width:884px;height:1px;background:#000000;"></div>
<div style="left:185px;top:106px;width:20px;height:264px;background:#d4d0c8;"></div>
<div style="left:208px;top:106px;width:861px;height:30px;background:#d4d0c8;"></div>
<div style="left:185px;top:120px;width:884px;height:1px;background:#000000;"></div>
<div style="left:185px;top:135px;width:884px;height:1px;background:#000000;"></div>
<div style="left:185px;top:150px;width:884px;height:1px;background:#000000;"></div>
<div style="left:185px;top:165px;width:884px;height:1px;background:#000000;"></div>
<div style="left:185px;top:180px;width:884px;height:1px;background:#000000;"></div>
<div style="left:185px;top:195px;width:884px;height:1px;background:#000000;"></div>
<div style="left:185px;top:210px;width:884px;height:1px;background:#000000;"></div>
<div style="left:185px;top:225px;width:884px;height:1px;background:#000000;"></div>
<div style="left:185px;top:240px;width:884px;height:1px;background:#000000;"></div>
<div style="left:185px;top:255px;width:884px;height:1px;background:#000000;"></div>
<div style="left:185px;top:270px;width:884px;height:1px;background:#000000;"></div>
<div style="left:185px;top:285px;width:884px;height:1px;background:#000000;"></div>
<div style="left:185px;top:300px;width:884px;height:1px;background:#000000;"></div>
<div style="left:185px;top:315px;width:884px;height:1px;background:#000000;"></div>
<div style="left:185px;top:330px;width:884px;height:1px;background:#000000;"></div>
<div style="left:185px;top:345px;width:884px;height:1px;background:#000000;"></div>
<div style="left:185px;top:360px;width:884px;height:1px;background:#000000;"></div>
<div style="left:205px;top:90px;width:1px;height:280px;background:#000000;"></div>
<div style="left:206px;top:90px;width:1px;height:280px;background:#ffffff;"></div>
<div style="left:207px;top:90px;width:1px;height:280px;background:#000000;"></div>
<div style="left:564px;top:90px;width:1px;height:280px;background:#000000;"></div>
<div style="left:565px;top:90px;width:1px;height:280px;background:#ffffff;"></div>
<div style="left:566px;top:90px;width:1px;height:280px;background:#000000;"></div>
<div style="left:631px;top:90px;width:1px;height:280px;background:#000000;"></div>
<div style="left:632px;top:90px;width:1px;height:280px;background:#ffffff;"></div>
<div style="left:633px;top:90px;width:1px;height:280px;background:#000000;"></div>
<div style="left:695px;top:90px;width:1px;height:280px;background:#000000;"></div>
<div style="left:696px;top:90px;width:1px;height:280px;background:#ffffff;"></div>
<div style="left:697px;top:90px;width:1px;height:280px;background:#000000;"></div>
<div style="left:745px;top:90px;width:1px;height:280px;background:#000000;"></div>
<div style="left:746px;top:90px;width:1px;height:280px;background:#ffffff;"></div>
<div style="left:747px;top:90px;width:1px;height:280px;background:#000000;"></div>
<div style="left:792px;top:90px;width:1px;height:280px;background:#000000;"></div>
<div style="left:793px;top:90px;width:1px;height:280px;background:#ffffff;"></div>
<div style="left:794px;top:90px;width:1px;height:280px;background:#000000;"></div>
<div style="left:876px;top:90px;width:1px;height:280px;background:#000000;"></div>
<div style="left:877px;top:90px;width:1px;height:280px;background:#ffffff;"></div>
<div style="left:878px;top:90px;width:1px;height:280px;background:#000000;"></div>
<div style="left:958px;top:90px;width:1px;height:280px;background:#000000;"></div>
<div style="left:959px;top:90px;width:1px;height:280px;background:#ffffff;"></div>
<div style="left:960px;top:90px;width:1px;height:280px;background:#000000;"></div>
<div style="left:208px;top:211px;width:356px;height:14px;background:#0a246a;"></div>
<div style="left:208px;top:211px;width:354px;height:12px;border:1px dotted #e8d870;"></div>
<svg style="left:186px;top:106px" width="16px" height="14px" shape-rendering="crispEdges"><use href="#fy"/></svg>
<div class="t" style="left:211px;top:107px;font-size:12px;line-height:13px;color:#000;white-space:pre;transform:scaleX(0.9167);transform-origin:0 0;">04. Пенза Эра</div>
<svg style="left:186px;top:121px" width="16px" height="14px" shape-rendering="crispEdges"><use href="#fy"/></svg>
<div class="t" style="left:211px;top:122px;font-size:12px;line-height:13px;color:#000;white-space:pre;transform:scaleX(0.9167);transform-origin:0 0;">ЛДСП Лоредо</div>
<svg style="left:186px;top:136px" width="16px" height="14px" shape-rendering="crispEdges"><use href="#fc"/></svg>
<div class="t" style="left:211px;top:137px;font-size:12px;line-height:13px;color:#000;white-space:pre;transform:scaleX(0.9167);transform-origin:0 0;">ЛДСП Лоредо - Мойка 500</div>
<div class="t" style="left:429px;top:137px;font-size:12px;line-height:13px;color:#000;white-space:pre;width:218.17px;text-align:right;transform:scaleX(0.9167);transform-origin:0 0;">4</div>
<div class="t" style="left:674px;top:137px;font-size:12px;line-height:13px;color:#000;white-space:pre;width:218.17px;text-align:right;transform:scaleX(0.9167);transform-origin:0 0;">4'300.00</div>
<div class="t" style="left:756px;top:137px;font-size:12px;line-height:13px;color:#000;white-space:pre;width:218.17px;text-align:right;transform:scaleX(0.9167);transform-origin:0 0;">150</div>
<div class="t" style="left:867px;top:137px;font-size:12px;line-height:13px;color:#000;white-space:pre;width:218.17px;text-align:right;transform:scaleX(0.9167);transform-origin:0 0;">40</div>
<svg style="left:186px;top:151px" width="16px" height="14px" shape-rendering="crispEdges"><use href="#fc"/></svg>
<div class="t" style="left:211px;top:152px;font-size:12px;line-height:13px;color:#000;white-space:pre;transform:scaleX(0.9167);transform-origin:0 0;">ЛДСП Лоредо - Мойка 600</div>
<div class="t" style="left:429px;top:152px;font-size:12px;line-height:13px;color:#000;white-space:pre;width:218.17px;text-align:right;transform:scaleX(0.9167);transform-origin:0 0;">4</div>
<div class="t" style="left:590px;top:152px;font-size:12px;line-height:13px;color:#000;white-space:pre;width:218.17px;text-align:right;transform:scaleX(0.9167);transform-origin:0 0;">1</div>
<div class="t" style="left:674px;top:152px;font-size:12px;line-height:13px;color:#000;white-space:pre;width:218.17px;text-align:right;transform:scaleX(0.9167);transform-origin:0 0;">4'400.00</div>
<div class="t" style="left:756px;top:152px;font-size:12px;line-height:13px;color:#000;white-space:pre;width:218.17px;text-align:right;transform:scaleX(0.9167);transform-origin:0 0;">150</div>
<div class="t" style="left:867px;top:152px;font-size:12px;line-height:13px;color:#000;white-space:pre;width:218.17px;text-align:right;transform:scaleX(0.9167);transform-origin:0 0;">40</div>
<svg style="left:186px;top:166px" width="16px" height="14px" shape-rendering="crispEdges"><use href="#fc"/></svg>
<div class="t" style="left:211px;top:167px;font-size:12px;line-height:13px;color:#000;white-space:pre;transform:scaleX(0.9167);transform-origin:0 0;">ЛДСП Лоредо - Мойка 800</div>
<div class="t" style="left:493px;top:167px;font-size:12px;line-height:13px;color:#000;white-space:pre;width:218.17px;text-align:right;transform:scaleX(0.9167);transform-origin:0 0;">1</div>
<div class="t" style="left:674px;top:167px;font-size:12px;line-height:13px;color:#000;white-space:pre;width:218.17px;text-align:right;transform:scaleX(0.9167);transform-origin:0 0;">4'950.00</div>
<div class="t" style="left:756px;top:167px;font-size:12px;line-height:13px;color:#000;white-space:pre;width:218.17px;text-align:right;transform:scaleX(0.9167);transform-origin:0 0;">150</div>
<div class="t" style="left:867px;top:167px;font-size:12px;line-height:13px;color:#000;white-space:pre;width:218.17px;text-align:right;transform:scaleX(0.9167);transform-origin:0 0;">40</div>
<svg style="left:186px;top:181px" width="16px" height="14px" shape-rendering="crispEdges"><use href="#fc"/></svg>
<div class="t" style="left:211px;top:182px;font-size:12px;line-height:13px;color:#000;white-space:pre;transform:scaleX(0.9167);transform-origin:0 0;">ЛДСП Лоредо - Пенал 400</div>
<div class="t" style="left:429px;top:182px;font-size:12px;line-height:13px;color:#000;white-space:pre;width:218.17px;text-align:right;transform:scaleX(0.9167);transform-origin:0 0;">5</div>
<div class="t" style="left:674px;top:182px;font-size:12px;line-height:13px;color:#000;white-space:pre;width:218.17px;text-align:right;transform:scaleX(0.9167);transform-origin:0 0;">5'500.00</div>
<div class="t" style="left:756px;top:182px;font-size:12px;line-height:13px;color:#000;white-space:pre;width:218.17px;text-align:right;transform:scaleX(0.9167);transform-origin:0 0;">400</div>
<div class="t" style="left:867px;top:182px;font-size:12px;line-height:13px;color:#000;white-space:pre;width:218.17px;text-align:right;transform:scaleX(0.9167);transform-origin:0 0;">50</div>
<svg style="left:186px;top:196px" width="16px" height="14px" shape-rendering="crispEdges"><use href="#fc"/></svg>
<div class="t" style="left:211px;top:197px;font-size:12px;line-height:13px;color:#000;white-space:pre;transform:scaleX(0.9167);transform-origin:0 0;">ЛДСП Лоредо - Полка над вытяжкой 500</div>
<div class="t" style="left:429px;top:197px;font-size:12px;line-height:13px;color:#000;white-space:pre;width:218.17px;text-align:right;transform:scaleX(0.9167);transform-origin:0 0;">3</div>
<div class="t" style="left:493px;top:197px;font-size:12px;line-height:13px;color:#000;white-space:pre;width:218.17px;text-align:right;transform:scaleX(0.9167);transform-origin:0 0;">1</div>
<div class="t" style="left:674px;top:197px;font-size:12px;line-height:13px;color:#000;white-space:pre;width:218.17px;text-align:right;transform:scaleX(0.9167);transform-origin:0 0;">1'300.00</div>
<div class="t" style="left:756px;top:197px;font-size:12px;line-height:13px;color:#000;white-space:pre;width:218.17px;text-align:right;transform:scaleX(0.9167);transform-origin:0 0;">100</div>
<div class="t" style="left:867px;top:197px;font-size:12px;line-height:13px;color:#000;white-space:pre;width:218.17px;text-align:right;transform:scaleX(0.9167);transform-origin:0 0;">20</div>
<svg style="left:186px;top:211px" width="16px" height="14px" shape-rendering="crispEdges"><use href="#fc"/></svg>
<div class="t" style="left:211px;top:212px;font-size:12px;line-height:13px;color:#ffffff;white-space:pre;transform:scaleX(0.9167);transform-origin:0 0;">ЛДСП Лоредо - Полка над вытяжкой 600</div>
<div class="t" style="left:429px;top:212px;font-size:12px;line-height:13px;color:#000;white-space:pre;width:218.17px;text-align:right;transform:scaleX(0.9167);transform-origin:0 0;">3</div>
<div class="t" style="left:674px;top:212px;font-size:12px;line-height:13px;color:#000;white-space:pre;width:218.17px;text-align:right;transform:scaleX(0.9167);transform-origin:0 0;">1'450.00</div>
<div class="t" style="left:756px;top:212px;font-size:12px;line-height:13px;color:#000;white-space:pre;width:218.17px;text-align:right;transform:scaleX(0.9167);transform-origin:0 0;">100</div>
<div class="t" style="left:867px;top:212px;font-size:12px;line-height:13px;color:#000;white-space:pre;width:218.17px;text-align:right;transform:scaleX(0.9167);transform-origin:0 0;">20</div>
<svg style="left:186px;top:226px" width="16px" height="14px" shape-rendering="crispEdges"><use href="#fc"/></svg>
<div class="t" style="left:211px;top:227px;font-size:12px;line-height:13px;color:#000;white-space:pre;transform:scaleX(0.9167);transform-origin:0 0;">ЛДСП Лоредо - Полка торцевая 285</div>
<div class="t" style="left:674px;top:227px;font-size:12px;line-height:13px;color:#000;white-space:pre;width:218.17px;text-align:right;transform:scaleX(0.9167);transform-origin:0 0;">1'000.00</div>
<div class="t" style="left:756px;top:227px;font-size:12px;line-height:13px;color:#000;white-space:pre;width:218.17px;text-align:right;transform:scaleX(0.9167);transform-origin:0 0;">100</div>
<div class="t" style="left:867px;top:227px;font-size:12px;line-height:13px;color:#000;white-space:pre;width:218.17px;text-align:right;transform:scaleX(0.9167);transform-origin:0 0;">20</div>
<svg style="left:186px;top:241px" width="16px" height="14px" shape-rendering="crispEdges"><use href="#fc"/></svg>
<div class="t" style="left:211px;top:242px;font-size:12px;line-height:13px;color:#000;white-space:pre;transform:scaleX(0.9167);transform-origin:0 0;">ЛДСП Лоредо - Стол 300</div>
<div class="t" style="left:674px;top:242px;font-size:12px;line-height:13px;color:#000;white-space:pre;width:218.17px;text-align:right;transform:scaleX(0.9167);transform-origin:0 0;">2'100.00</div>
<div class="t" style="left:756px;top:242px;font-size:12px;line-height:13px;color:#000;white-space:pre;width:218.17px;text-align:right;transform:scaleX(0.9167);transform-origin:0 0;">150</div>
<div class="t" style="left:867px;top:242px;font-size:12px;line-height:13px;color:#000;white-space:pre;width:218.17px;text-align:right;transform:scaleX(0.9167);transform-origin:0 0;">40</div>
<svg style="left:186px;top:256px" width="16px" height="14px" shape-rendering="crispEdges"><use href="#fc"/></svg>
<div class="t" style="left:211px;top:257px;font-size:12px;line-height:13px;color:#000;white-space:pre;transform:scaleX(0.9167);transform-origin:0 0;">ЛДСП Лоредо - Стол 300 с 1 ящ.</div>
<div class="t" style="left:429px;top:257px;font-size:12px;line-height:13px;color:#000;white-space:pre;width:218.17px;text-align:right;transform:scaleX(0.9167);transform-origin:0 0;">1</div>
<div class="t" style="left:674px;top:257px;font-size:12px;line-height:13px;color:#000;white-space:pre;width:218.17px;text-align:right;transform:scaleX(0.9167);transform-origin:0 0;">2'400.00</div>
<div class="t" style="left:756px;top:257px;font-size:12px;line-height:13px;color:#000;white-space:pre;width:218.17px;text-align:right;transform:scaleX(0.9167);transform-origin:0 0;">250</div>
<div class="t" style="left:867px;top:257px;font-size:12px;line-height:13px;color:#000;white-space:pre;width:218.17px;text-align:right;transform:scaleX(0.9167);transform-origin:0 0;">40</div>
<svg style="left:186px;top:271px" width="16px" height="14px" shape-rendering="crispEdges"><use href="#fc"/></svg>
<div class="t" style="left:211px;top:272px;font-size:12px;line-height:13px;color:#000;white-space:pre;transform:scaleX(0.9167);transform-origin:0 0;">ЛДСП Лоредо - Стол 300 с 4 ящ.</div>
<div class="t" style="left:429px;top:272px;font-size:12px;line-height:13px;color:#000;white-space:pre;width:218.17px;text-align:right;transform:scaleX(0.9167);transform-origin:0 0;">2</div>
<div class="t" style="left:493px;top:272px;font-size:12px;line-height:13px;color:#000;white-space:pre;width:218.17px;text-align:right;transform:scaleX(0.9167);transform-origin:0 0;">1</div>
<div class="t" style="left:543px;top:272px;font-size:12px;line-height:13px;color:#000;white-space:pre;width:218.17px;text-align:right;transform:scaleX(0.9167);transform-origin:0 0;">1</div>
<div class="t" style="left:590px;top:272px;font-size:12px;line-height:13px;color:#000;white-space:pre;width:218.17px;text-align:right;transform:scaleX(0.9167);transform-origin:0 0;">1</div>
<div class="t" style="left:674px;top:272px;font-size:12px;line-height:13px;color:#000;white-space:pre;width:218.17px;text-align:right;transform:scaleX(0.9167);transform-origin:0 0;">3'150.00</div>
<div class="t" style="left:756px;top:272px;font-size:12px;line-height:13px;color:#000;white-space:pre;width:218.17px;text-align:right;transform:scaleX(0.9167);transform-origin:0 0;">350</div>
<div class="t" style="left:867px;top:272px;font-size:12px;line-height:13px;color:#000;white-space:pre;width:218.17px;text-align:right;transform:scaleX(0.9167);transform-origin:0 0;">40</div>
<svg style="left:186px;top:286px" width="16px" height="14px" shape-rendering="crispEdges"><use href="#fc"/></svg>
<div class="t" style="left:211px;top:287px;font-size:12px;line-height:13px;color:#000;white-space:pre;transform:scaleX(0.9167);transform-origin:0 0;">ЛДСП Лоредо - Стол 400</div>
<div class="t" style="left:429px;top:287px;font-size:12px;line-height:13px;color:#000;white-space:pre;width:218.17px;text-align:right;transform:scaleX(0.9167);transform-origin:0 0;">1</div>
<div class="t" style="left:493px;top:287px;font-size:12px;line-height:13px;color:#000;white-space:pre;width:218.17px;text-align:right;transform:scaleX(0.9167);transform-origin:0 0;">1</div>
<div class="t" style="left:543px;top:287px;font-size:12px;line-height:13px;color:#000;white-space:pre;width:218.17px;text-align:right;transform:scaleX(0.9167);transform-origin:0 0;">1</div>
<div class="t" style="left:674px;top:287px;font-size:12px;line-height:13px;color:#000;white-space:pre;width:218.17px;text-align:right;transform:scaleX(0.9167);transform-origin:0 0;">2'450.00</div>
<div class="t" style="left:756px;top:287px;font-size:12px;line-height:13px;color:#000;white-space:pre;width:218.17px;text-align:right;transform:scaleX(0.9167);transform-origin:0 0;">150</div>
<div class="t" style="left:867px;top:287px;font-size:12px;line-height:13px;color:#000;white-space:pre;width:218.17px;text-align:right;transform:scaleX(0.9167);transform-origin:0 0;">40</div>
<svg style="left:186px;top:301px" width="16px" height="14px" shape-rendering="crispEdges"><use href="#fc"/></svg>
<div class="t" style="left:211px;top:302px;font-size:12px;line-height:13px;color:#000;white-space:pre;transform:scaleX(0.9167);transform-origin:0 0;">ЛДСП Лоредо - Стол 400 с 1 ящ.</div>
<div class="t" style="left:429px;top:302px;font-size:12px;line-height:13px;color:#000;white-space:pre;width:218.17px;text-align:right;transform:scaleX(0.9167);transform-origin:0 0;">3</div>
<div class="t" style="left:674px;top:302px;font-size:12px;line-height:13px;color:#000;white-space:pre;width:218.17px;text-align:right;transform:scaleX(0.9167);transform-origin:0 0;">2'850.00</div>
<div class="t" style="left:756px;top:302px;font-size:12px;line-height:13px;color:#000;white-space:pre;width:218.17px;text-align:right;transform:scaleX(0.9167);transform-origin:0 0;">250</div>
<div class="t" style="left:867px;top:302px;font-size:12px;line-height:13px;color:#000;white-space:pre;width:218.17px;text-align:right;transform:scaleX(0.9167);transform-origin:0 0;">40</div>
<svg style="left:186px;top:316px" width="16px" height="14px" shape-rendering="crispEdges"><use href="#fc"/></svg>
<div class="t" style="left:211px;top:317px;font-size:12px;line-height:13px;color:#000;white-space:pre;transform:scaleX(0.9167);transform-origin:0 0;">ЛДСП Лоредо - Стол 400 с 2 ящ.</div>
<div class="t" style="left:756px;top:317px;font-size:12px;line-height:13px;color:#000;white-space:pre;width:218.17px;text-align:right;transform:scaleX(0.9167);transform-origin:0 0;">300</div>
<div class="t" style="left:867px;top:317px;font-size:12px;line-height:13px;color:#000;white-space:pre;width:218.17px;text-align:right;transform:scaleX(0.9167);transform-origin:0 0;">40</div>
<svg style="left:186px;top:331px" width="16px" height="14px" shape-rendering="crispEdges"><use href="#fc"/></svg>
<div class="t" style="left:211px;top:332px;font-size:12px;line-height:13px;color:#000;white-space:pre;transform:scaleX(0.9167);transform-origin:0 0;">ЛДСП Лоредо - Стол 400 с 4 ящ.</div>
<div class="t" style="left:429px;top:332px;font-size:12px;line-height:13px;color:#000;white-space:pre;width:218.17px;text-align:right;transform:scaleX(0.9167);transform-origin:0 0;">2</div>
<div class="t" style="left:493px;top:332px;font-size:12px;line-height:13px;color:#000;white-space:pre;width:218.17px;text-align:right;transform:scaleX(0.9167);transform-origin:0 0;">1</div>
<div class="t" style="left:674px;top:332px;font-size:12px;line-height:13px;color:#000;white-space:pre;width:218.17px;text-align:right;transform:scaleX(0.9167);transform-origin:0 0;">3'500.00</div>
<div class="t" style="left:756px;top:332px;font-size:12px;line-height:13px;color:#000;white-space:pre;width:218.17px;text-align:right;transform:scaleX(0.9167);transform-origin:0 0;">350</div>
<div class="t" style="left:867px;top:332px;font-size:12px;line-height:13px;color:#000;white-space:pre;width:218.17px;text-align:right;transform:scaleX(0.9167);transform-origin:0 0;">40</div>
<svg style="left:186px;top:346px" width="16px" height="14px" shape-rendering="crispEdges"><use href="#fc"/></svg>
<div class="t" style="left:211px;top:347px;font-size:12px;line-height:13px;color:#000;white-space:pre;transform:scaleX(0.9167);transform-origin:0 0;">ЛДСП Лоредо - Стол 500</div>
<div class="t" style="left:429px;top:347px;font-size:12px;line-height:13px;color:#000;white-space:pre;width:218.17px;text-align:right;transform:scaleX(0.9167);transform-origin:0 0;">2</div>
<div class="t" style="left:493px;top:347px;font-size:12px;line-height:13px;color:#000;white-space:pre;width:218.17px;text-align:right;transform:scaleX(0.9167);transform-origin:0 0;">1</div>
<div class="t" style="left:543px;top:347px;font-size:12px;line-height:13px;color:#000;white-space:pre;width:218.17px;text-align:right;transform:scaleX(0.9167);transform-origin:0 0;">1</div>
<div class="t" style="left:590px;top:347px;font-size:12px;line-height:13px;color:#000;white-space:pre;width:218.17px;text-align:right;transform:scaleX(0.9167);transform-origin:0 0;">1</div>
<div class="t" style="left:674px;top:347px;font-size:12px;line-height:13px;color:#000;white-space:pre;width:218.17px;text-align:right;transform:scaleX(0.9167);transform-origin:0 0;">2'950.00</div>
<div class="t" style="left:756px;top:347px;font-size:12px;line-height:13px;color:#000;white-space:pre;width:218.17px;text-align:right;transform:scaleX(0.9167);transform-origin:0 0;">150</div>
<div class="t" style="left:867px;top:347px;font-size:12px;line-height:13px;color:#000;white-space:pre;width:218.17px;text-align:right;transform:scaleX(0.9167);transform-origin:0 0;">40</div>
<div class="t" style="left:210px;top:91px;font-size:12px;line-height:13px;color:#000;white-space:pre;font-weight:bold;">Наименование</div>
<div class="t" style="left:569px;top:91px;font-size:12px;line-height:13px;color:#000;white-space:pre;font-weight:bold;">Склад</div>
<div class="t" style="left:636px;top:91px;font-size:12px;line-height:13px;color:#000;white-space:pre;font-weight:bold;">Алеша</div>
<div class="t" style="left:699px;top:91px;font-size:12px;line-height:13px;color:#000;white-space:pre;font-weight:bold;">ММ</div>
<div class="t" style="left:749px;top:91px;font-size:12px;line-height:13px;color:#000;white-space:pre;font-weight:bold;transform:scaleX(1.1);transform-origin:0 0;">ХФ</div>
<div class="t" style="left:796px;top:91px;font-size:12px;line-height:13px;color:#000;white-space:pre;font-weight:bold;transform:scaleX(1.04);transform-origin:0 0;">Цена</div>
<div class="t" style="left:886px;top:91px;font-size:12px;line-height:13px;color:#000;white-space:pre;font-weight:bold;">Сборка</div>
<div class="t" style="left:966px;top:91px;font-size:12px;line-height:13px;color:#000;white-space:pre;font-weight:bold;">Подъем</div>
<div style="left:1069px;top:90px;width:16px;height:279px;background:#d4d0c8;background-image:repeating-conic-gradient(#ffffff 0 25%, #d4d0c8 0 50%);background-size:2px 2px;"></div>
<div style="left:1069px;top:90px;width:16px;height:16px;background:#d4d0c8;"></div>
<div style="left:1070px;top:91px;width:14px;height:1px;background:#ffffff;"></div>
<div style="left:1070px;top:91px;width:1px;height:14px;background:#ffffff;"></div>
<div style="left:1069px;top:105px;width:16px;height:1px;background:#404040;"></div>
<div style="left:1084px;top:90px;width:1px;height:16px;background:#404040;"></div>
<div style="left:1070px;top:104px;width:14px;height:1px;background:#808080;"></div>
<div style="left:1083px;top:91px;width:1px;height:14px;background:#808080;"></div>
<svg style="left:1069px;top:90px" width="16" height="16" shape-rendering="crispEdges"><path d="M7 6h1v1h1v1h1v1h1v1h-7v-1h1v-1h1v-1h1z" fill="#000"/></svg>
<div style="left:1069px;top:153px;width:16px;height:16px;background:#d4d0c8;"></div>
<div style="left:1070px;top:154px;width:14px;height:1px;background:#ffffff;"></div>
<div style="left:1070px;top:154px;width:1px;height:14px;background:#ffffff;"></div>
<div style="left:1069px;top:168px;width:16px;height:1px;background:#404040;"></div>
<div style="left:1084px;top:153px;width:1px;height:16px;background:#404040;"></div>
<div style="left:1070px;top:167px;width:14px;height:1px;background:#808080;"></div>
<div style="left:1083px;top:154px;width:1px;height:14px;background:#808080;"></div>
<div style="left:1069px;top:353px;width:16px;height:16px;background:#d4d0c8;"></div>
<div style="left:1070px;top:354px;width:14px;height:1px;background:#ffffff;"></div>
<div style="left:1070px;top:354px;width:1px;height:14px;background:#ffffff;"></div>
<div style="left:1069px;top:368px;width:16px;height:1px;background:#404040;"></div>
<div style="left:1084px;top:353px;width:1px;height:16px;background:#404040;"></div>
<div style="left:1070px;top:367px;width:14px;height:1px;background:#808080;"></div>
<div style="left:1083px;top:354px;width:1px;height:14px;background:#808080;"></div>
<svg style="left:1069px;top:353px" width="16" height="16" shape-rendering="crispEdges"><path d="M4 6h7v1h-1v1h-1v1h-1v1h-1v-1h-1v-1h-1v-1h-1z" fill="#000"/></svg>
<div style="left:6px;top:377px;width:13px;height:13px;background:#ffffff;"></div>
<div style="left:6px;top:377px;width:13px;height:1px;background:#808080;"></div>
<div style="left:6px;top:377px;width:1px;height:13px;background:#808080;"></div>
<div style="left:7px;top:378px;width:11px;height:1px;background:#404040;"></div>
<div style="left:7px;top:378px;width:1px;height:11px;background:#404040;"></div>
<div style="left:6px;top:389px;width:13px;height:1px;background:#ffffff;"></div>
<div style="left:18px;top:377px;width:1px;height:13px;background:#ffffff;"></div>
<div style="left:7px;top:388px;width:11px;height:1px;background:#d4d0c8;"></div>
<div style="left:17px;top:378px;width:1px;height:11px;background:#d4d0c8;"></div>
<svg style="position:absolute;left:6px;top:377px" width="13" height="13" shape-rendering="crispEdges"><path d="M3 5h1v1h-1zM3 6h2v1h-2zM3 7h3v1h-3zM4 8h3v1h-3zM5 9h1v1h-1zM6 8h1v-1h1v-1h1v-1h1v-1h-1v1h-1v1h-1v1h-1z" fill="#000"/><path d="M4 6h1v3h-1zM5 7h1v3h-1zM6 6h1v3h-1zM7 5h1v3h-1zM8 4h1v3h-1zM9 3h1v3h-1zM3 5h1v3h-1z" fill="#000"/></svg>
<div class="t" style="left:25px;top:378px;font-size:12px;line-height:13px;color:#000;white-space:pre;transform:scaleX(0.93);transform-origin:0 0;">Остатки и цена в колонке</div>
<div class="t" style="left:180px;top:378px;font-size:12px;line-height:13px;color:#000080;white-space:pre;font-weight:bold;letter-spacing:0.14px;">ЛДСП Лоредо - Полка над вытяжкой 600</div>
<div style="left:7px;top:404px;width:780px;height:177px;background:#ffffff;"></div>
<div style="left:7px;top:404px;width:780px;height:1px;background:#808080;"></div>
<div style="left:7px;top:404px;width:1px;height:177px;background:#808080;"></div>
<div style="left:8px;top:405px;width:778px;height:1px;background:#404040;"></div>
<div style="left:8px;top:405px;width:1px;height:175px;background:#404040;"></div>
<div style="left:7px;top:580px;width:780px;height:1px;background:#ffffff;"></div>
<div style="left:786px;top:404px;width:1px;height:177px;background:#ffffff;"></div>
<div style="left:8px;top:579px;width:778px;height:1px;background:#d4d0c8;"></div>
<div style="left:785px;top:405px;width:1px;height:175px;background:#d4d0c8;"></div>
<div style="left:9px;top:406px;width:41px;height:13px;background:#d4d0c8;"></div>
<div style="left:9px;top:406px;width:41px;height:1px;background:#ffffff;"></div>
<div style="left:9px;top:406px;width:1px;height:13px;background:#ffffff;"></div>
<div style="left:53px;top:406px;width:41px;height:13px;background:#d4d0c8;"></div>
<div style="left:53px;top:406px;width:41px;height:1px;background:#ffffff;"></div>
<div style="left:53px;top:406px;width:1px;height:13px;background:#ffffff;"></div>
<div style="left:97px;top:406px;width:289px;height:13px;background:#d4d0c8;"></div>
<div style="left:97px;top:406px;width:289px;height:1px;background:#ffffff;"></div>
<div style="left:97px;top:406px;width:1px;height:13px;background:#ffffff;"></div>
<div style="left:389px;top:406px;width:41px;height:13px;background:#d4d0c8;"></div>
<div style="left:389px;top:406px;width:41px;height:1px;background:#ffffff;"></div>
<div style="left:389px;top:406px;width:1px;height:13px;background:#ffffff;"></div>
<div style="left:433px;top:406px;width:103px;height:13px;background:#d4d0c8;"></div>
<div style="left:433px;top:406px;width:103px;height:1px;background:#ffffff;"></div>
<div style="left:433px;top:406px;width:1px;height:13px;background:#ffffff;"></div>
<div style="left:539px;top:406px;width:103px;height:13px;background:#d4d0c8;"></div>
<div style="left:539px;top:406px;width:103px;height:1px;background:#ffffff;"></div>
<div style="left:539px;top:406px;width:1px;height:13px;background:#ffffff;"></div>
<div style="left:645px;top:406px;width:124px;height:13px;background:#d4d0c8;"></div>
<div style="left:645px;top:406px;width:124px;height:1px;background:#ffffff;"></div>
<div style="left:645px;top:406px;width:1px;height:13px;background:#ffffff;"></div>
<div style="left:9px;top:406px;width:41px;height:13px;background:#d4d0c8;"></div>
<div style="left:9px;top:406px;width:41px;height:1px;background:#808080;"></div>
<div style="left:9px;top:406px;width:1px;height:13px;background:#808080;"></div>
<div style="left:9px;top:419px;width:760px;height:1px;background:#000000;"></div>
<div style="left:9px;top:420px;width:760px;height:1px;background:#ffffff;"></div>
<div style="left:9px;top:421px;width:760px;height:1px;background:#000000;"></div>
<div style="left:9px;top:436px;width:760px;height:1px;background:#000000;"></div>
<div style="left:9px;top:451px;width:760px;height:1px;background:#000000;"></div>
<div style="left:9px;top:466px;width:760px;height:1px;background:#000000;"></div>
<div style="left:9px;top:481px;width:760px;height:1px;background:#000000;"></div>
<div style="left:9px;top:496px;width:760px;height:1px;background:#000000;"></div>
<div style="left:9px;top:511px;width:760px;height:1px;background:#000000;"></div>
<div style="left:9px;top:526px;width:760px;height:1px;background:#000000;"></div>
<div style="left:9px;top:541px;width:760px;height:1px;background:#000000;"></div>
<div style="left:9px;top:556px;width:760px;height:1px;background:#000000;"></div>
<div style="left:9px;top:571px;width:760px;height:1px;background:#000000;"></div>
<div style="left:50px;top:406px;width:1px;height:174px;background:#000000;"></div>
<div style="left:51px;top:406px;width:1px;height:174px;background:#ffffff;"></div>
<div style="left:52px;top:406px;width:1px;height:174px;background:#000000;"></div>
<div style="left:94px;top:406px;width:1px;height:174px;background:#000000;"></div>
<div style="left:95px;top:406px;width:1px;height:174px;background:#ffffff;"></div>
<div style="left:96px;top:406px;width:1px;height:174px;background:#000000;"></div>
<div style="left:386px;top:406px;width:1px;height:174px;background:#000000;"></div>
<div style="left:387px;top:406px;width:1px;height:174px;background:#ffffff;"></div>
<div style="left:388px;top:406px;width:1px;height:174px;background:#000000;"></div>
<div style="left:430px;top:406px;width:1px;height:174px;background:#000000;"></div>
<div style="left:431px;top:406px;width:1px;height:174px;background:#ffffff;"></div>
<div style="left:432px;top:406px;width:1px;height:174px;background:#000000;"></div>
<div style="left:536px;top:406px;width:1px;height:174px;background:#000000;"></div>
<div style="left:537px;top:406px;width:1px;height:174px;background:#ffffff;"></div>
<div style="left:538px;top:406px;width:1px;height:174px;background:#000000;"></div>
<div style="left:642px;top:406px;width:1px;height:174px;background:#000000;"></div>
<div style="left:643px;top:406px;width:1px;height:174px;background:#ffffff;"></div>
<div style="left:644px;top:406px;width:1px;height:174px;background:#000000;"></div>
<div style="left:9px;top:452px;width:41px;height:14px;background:#0a246a;"></div>
<div style="left:12px;top:412px;width:6px;height:2px;background:#000000;"></div>
<div style="left:14px;top:410px;width:2px;height:6px;background:#000000;"></div>
<div style="left:56px;top:413px;width:3px;height:1px;background:#000000;"></div>
<div class="t" style="left:99px;top:407px;font-size:12px;line-height:13px;color:#000;white-space:pre;font-weight:bold;transform:scaleX(0.962);transform-origin:0 0;">Выбранный товар</div>
<div class="t" style="left:391px;top:407px;font-size:12px;line-height:13px;color:#000;white-space:pre;font-weight:bold;">Ед.</div>
<div class="t" style="left:435px;top:407px;font-size:12px;line-height:13px;color:#000;white-space:pre;font-weight:bold;">Количество</div>
<div class="t" style="left:541px;top:407px;font-size:12px;line-height:13px;color:#000;white-space:pre;font-weight:bold;transform:scaleX(1.03);transform-origin:0 0;">Цена</div>
<div class="t" style="left:647px;top:407px;font-size:12px;line-height:13px;color:#000;white-space:pre;font-weight:bold;">Сумма</div>
<svg style="left:14px;top:424px" width="10px" height="10px" shape-rendering="crispEdges"><use href="#gp"/></svg>
<svg style="left:58px;top:427px" width="10px" height="4px" shape-rendering="crispEdges"><use href="#rm"/></svg>
<div class="t" style="left:100px;top:423px;font-size:12px;line-height:13px;color:#000;white-space:pre;transform:scaleX(0.9167);transform-origin:0 0;">ЛДСП Лоредо - Полка над вытяжкой 600</div>
<div class="t" style="left:391px;top:423px;font-size:12px;line-height:13px;color:#000;white-space:pre;transform:scaleX(0.9167);transform-origin:0 0;">шт.</div>
<div class="t" style="left:334px;top:423px;font-size:12px;line-height:13px;color:#000;white-space:pre;width:218.17px;text-align:right;transform:scaleX(0.9167);transform-origin:0 0;">1.000</div>
<div class="t" style="left:440px;top:423px;font-size:12px;line-height:13px;color:#000;white-space:pre;width:218.17px;text-align:right;transform:scaleX(0.9167);transform-origin:0 0;">1450.00</div>
<div class="t" style="left:567px;top:423px;font-size:12px;line-height:13px;color:#000;white-space:pre;width:218.17px;text-align:right;transform:scaleX(0.9167);transform-origin:0 0;">1450.00</div>
<svg style="left:14px;top:439px" width="10px" height="10px" shape-rendering="crispEdges"><use href="#gp"/></svg>
<svg style="left:58px;top:442px" width="10px" height="4px" shape-rendering="crispEdges"><use href="#rm"/></svg>
<div class="t" style="left:100px;top:438px;font-size:12px;line-height:13px;color:#000;white-space:pre;transform:scaleX(0.9167);transform-origin:0 0;">Сборка</div>
<div class="t" style="left:391px;top:438px;font-size:12px;line-height:13px;color:#000;white-space:pre;transform:scaleX(0.9167);transform-origin:0 0;">-</div>
<div class="t" style="left:334px;top:438px;font-size:12px;line-height:13px;color:#000;white-space:pre;width:218.17px;text-align:right;transform:scaleX(0.9167);transform-origin:0 0;">1.000</div>
<div class="t" style="left:440px;top:438px;font-size:12px;line-height:13px;color:#000;white-space:pre;width:218.17px;text-align:right;transform:scaleX(0.9167);transform-origin:0 0;">100.00</div>
<div class="t" style="left:567px;top:438px;font-size:12px;line-height:13px;color:#000;white-space:pre;width:218.17px;text-align:right;transform:scaleX(0.9167);transform-origin:0 0;">100.00</div>
<svg style="left:14px;top:454px" width="10px" height="10px" shape-rendering="crispEdges"><use href="#gp"/></svg>
<svg style="left:58px;top:457px" width="10px" height="4px" shape-rendering="crispEdges"><use href="#rm"/></svg>
<div class="t" style="left:100px;top:453px;font-size:12px;line-height:13px;color:#000;white-space:pre;transform:scaleX(0.9167);transform-origin:0 0;">Подъем</div>
<div class="t" style="left:391px;top:453px;font-size:12px;line-height:13px;color:#000;white-space:pre;transform:scaleX(0.9167);transform-origin:0 0;">эт.</div>
<div class="t" style="left:334px;top:453px;font-size:12px;line-height:13px;color:#000;white-space:pre;width:218.17px;text-align:right;transform:scaleX(0.9167);transform-origin:0 0;">1.000</div>
<div class="t" style="left:440px;top:453px;font-size:12px;line-height:13px;color:#000;white-space:pre;width:218.17px;text-align:right;transform:scaleX(0.9167);transform-origin:0 0;">20.00</div>
<div class="t" style="left:567px;top:453px;font-size:12px;line-height:13px;color:#000;white-space:pre;width:218.17px;text-align:right;transform:scaleX(0.9167);transform-origin:0 0;">20.00</div>
<div style="left:769px;top:406px;width:16px;height:174px;background:#d4d0c8;background-image:repeating-conic-gradient(#ffffff 0 25%, #d4d0c8 0 50%);background-size:2px 2px;"></div>
<div style="left:769px;top:406px;width:16px;height:16px;background:#d4d0c8;"></div>
<div style="left:770px;top:407px;width:14px;height:1px;background:#ffffff;"></div>
<div style="left:770px;top:407px;width:1px;height:14px;background:#ffffff;"></div>
<div style="left:769px;top:421px;width:16px;height:1px;background:#404040;"></div>
<div style="left:784px;top:406px;width:1px;height:16px;background:#404040;"></div>
<div style="left:770px;top:420px;width:14px;height:1px;background:#808080;"></div>
<div style="left:783px;top:407px;width:1px;height:14px;background:#808080;"></div>
<svg style="left:769px;top:406px" width="16" height="16" shape-rendering="crispEdges"><path d="M7 6h1v1h1v1h1v1h1v1h-7v-1h1v-1h1v-1h1z" fill="#000"/></svg>
<div style="left:769px;top:548px;width:16px;height:16px;background:#d4d0c8;"></div>
<div style="left:770px;top:549px;width:14px;height:1px;background:#ffffff;"></div>
<div style="left:770px;top:549px;width:1px;height:14px;background:#ffffff;"></div>
<div style="left:769px;top:563px;width:16px;height:1px;background:#404040;"></div>
<div style="left:784px;top:548px;width:1px;height:16px;background:#404040;"></div>
<div style="left:770px;top:562px;width:14px;height:1px;background:#808080;"></div>
<div style="left:783px;top:549px;width:1px;height:14px;background:#808080;"></div>
<div style="left:769px;top:564px;width:16px;height:16px;background:#d4d0c8;"></div>
<div style="left:770px;top:565px;width:14px;height:1px;background:#ffffff;"></div>
<div style="left:770px;top:565px;width:1px;height:14px;background:#ffffff;"></div>
<div style="left:769px;top:579px;width:16px;height:1px;background:#404040;"></div>
<div style="left:784px;top:564px;width:1px;height:16px;background:#404040;"></div>
<div style="left:770px;top:578px;width:14px;height:1px;background:#808080;"></div>
<div style="left:783px;top:565px;width:1px;height:14px;background:#808080;"></div>
<svg style="left:769px;top:564px" width="16" height="16" shape-rendering="crispEdges"><path d="M4 6h7v1h-1v1h-1v1h-1v1h-1v-1h-1v-1h-1v-1h-1z" fill="#000"/></svg>
<div style="left:6px;top:587px;width:82px;height:21px;background:#d4d0c8;"></div>
<div style="left:6px;top:587px;width:82px;height:1px;background:#ffffff;"></div>
<div style="left:6px;top:587px;width:1px;height:21px;background:#ffffff;"></div>
<div style="left:6px;top:607px;width:82px;height:1px;background:#404040;"></div>
<div style="left:87px;top:587px;width:1px;height:21px;background:#404040;"></div>
<div style="left:7px;top:606px;width:80px;height:1px;background:#808080;"></div>
<div style="left:86px;top:588px;width:1px;height:19px;background:#808080;"></div>
<div class="t" style="left:40px;top:592px;font-size:12px;line-height:13px;color:#000;white-space:pre;transform:scaleX(0.9167);transform-origin:0 0;">OK</div>
<div style="left:90px;top:587px;width:81px;height:21px;background:#d4d0c8;"></div>
<div style="left:90px;top:587px;width:81px;height:1px;background:#ffffff;"></div>
<div style="left:90px;top:587px;width:1px;height:21px;background:#ffffff;"></div>
<div style="left:90px;top:607px;width:81px;height:1px;background:#404040;"></div>
<div style="left:170px;top:587px;width:1px;height:21px;background:#404040;"></div>
<div style="left:91px;top:606px;width:79px;height:1px;background:#808080;"></div>
<div style="left:169px;top:588px;width:1px;height:19px;background:#808080;"></div>
<div class="t" style="left:108px;top:592px;font-size:12px;line-height:13px;color:#000;white-space:pre;transform:scaleX(0.98);transform-origin:0 0;">Закрыть</div>
<div style="left:108px;top:603px;width:7px;height:1px;background:#000000;"></div>
<div style="left:174px;top:587px;width:82px;height:21px;background:#d4d0c8;"></div>
<div style="left:174px;top:587px;width:82px;height:1px;background:#ffffff;"></div>
<div style="left:174px;top:587px;width:1px;height:21px;background:#ffffff;"></div>
<div style="left:174px;top:607px;width:82px;height:1px;background:#404040;"></div>
<div style="left:255px;top:587px;width:1px;height:21px;background:#404040;"></div>
<div style="left:175px;top:606px;width:80px;height:1px;background:#808080;"></div>
<div style="left:254px;top:588px;width:1px;height:19px;background:#808080;"></div>
<div class="t" style="left:198px;top:592px;font-size:12px;line-height:13px;color:#000;white-space:pre;transform:scaleX(0.9167);transform-origin:0 0;">Поиск</div>
<div style="left:795px;top:481px;width:23px;height:21px;background:#d4d0c8;"></div>
<div style="left:795px;top:481px;width:23px;height:1px;background:#ffffff;"></div>
<div style="left:795px;top:481px;width:1px;height:21px;background:#ffffff;"></div>
<div style="left:795px;top:501px;width:23px;height:1px;background:#404040;"></div>
<div style="left:817px;top:481px;width:1px;height:21px;background:#404040;"></div>
<div style="left:796px;top:500px;width:21px;height:1px;background:#808080;"></div>
<div style="left:816px;top:482px;width:1px;height:19px;background:#808080;"></div>
<svg style="left:795px;top:481px" width="23" height="21" shape-rendering="crispEdges" fill="#000"><rect x="8" y="6" width="1" height="1"/><rect x="14" y="6" width="1" height="1"/><rect x="9" y="7" width="1" height="1"/><rect x="13" y="7" width="1" height="1"/><rect x="9" y="8" width="1" height="1"/><rect x="13" y="8" width="1" height="1"/><rect x="10" y="9" width="1" height="1"/><rect x="12" y="9" width="1" height="1"/><rect x="11" y="10" width="1" height="1"/><rect x="10" y="11" width="1" height="1"/><rect x="12" y="11" width="1" height="1"/><rect x="9" y="12" width="1" height="1"/><rect x="13" y="12" width="1" height="1"/><rect x="9" y="13" width="1" height="1"/><rect x="13" y="13" width="1" height="1"/><rect x="8" y="14" width="1" height="1"/><rect x="14" y="14" width="1" height="1"/><rect x="8" y="5" width="1" height="1"/><rect x="14" y="5" width="1" height="1"/><rect x="8" y="15" width="1" height="1"/><rect x="14" y="15" width="1" height="1"/></svg>
<div style="left:821px;top:481px;width:78px;height:21px;background:#d4d0c8;"></div>
<div style="left:821px;top:481px;width:78px;height:1px;background:#ffffff;"></div>
<div style="left:821px;top:481px;width:1px;height:21px;background:#ffffff;"></div>
<div style="left:821px;top:501px;width:78px;height:1px;background:#404040;"></div>
<div style="left:898px;top:481px;width:1px;height:21px;background:#404040;"></div>
<div style="left:822px;top:500px;width:76px;height:1px;background:#808080;"></div>
<div style="left:897px;top:482px;width:1px;height:19px;background:#808080;"></div>
<div class="t" style="left:840px;top:486px;font-size:12px;line-height:13px;color:#000;white-space:pre;transform:scaleX(0.9167);transform-origin:0 0;">Остатки</div>
<div style="left:795px;top:505px;width:23px;height:21px;background:#d4d0c8;"></div>
<div style="left:795px;top:505px;width:23px;height:1px;background:#ffffff;"></div>
<div style="left:795px;top:505px;width:1px;height:21px;background:#ffffff;"></div>
<div style="left:795px;top:525px;width:23px;height:1px;background:#404040;"></div>
<div style="left:817px;top:505px;width:1px;height:21px;background:#404040;"></div>
<div style="left:796px;top:524px;width:21px;height:1px;background:#808080;"></div>
<div style="left:816px;top:506px;width:1px;height:19px;background:#808080;"></div>
<svg style="left:795px;top:505px" width="23" height="21" shape-rendering="crispEdges" fill="#000"><rect x="4" y="5" width="1" height="1"/><rect x="10" y="5" width="1" height="1"/><rect x="5" y="6" width="1" height="1"/><rect x="9" y="6" width="1" height="1"/><rect x="5" y="7" width="1" height="1"/><rect x="9" y="7" width="1" height="1"/><rect x="6" y="8" width="1" height="1"/><rect x="8" y="8" width="1" height="1"/><rect x="7" y="9" width="1" height="1"/><rect x="6" y="10" width="1" height="1"/><rect x="8" y="10" width="1" height="1"/><rect x="5" y="11" width="1" height="1"/><rect x="9" y="11" width="1" height="1"/><rect x="5" y="12" width="1" height="1"/><rect x="9" y="12" width="1" height="1"/><rect x="4" y="13" width="1" height="1"/><rect x="10" y="13" width="1" height="1"/><rect x="11" y="5" width="1" height="1"/><rect x="17" y="5" width="1" height="1"/><rect x="12" y="6" width="1" height="1"/><rect x="16" y="6" width="1" height="1"/><rect x="12" y="7" width="1" height="1"/><rect x="16" y="7" width="1" height="1"/><rect x="13" y="8" width="1" height="1"/><rect x="15" y="8" width="1" height="1"/><rect x="14" y="9" width="1" height="1"/><rect x="13" y="10" width="1" height="1"/><rect x="15" y="10" width="1" height="1"/><rect x="12" y="11" width="1" height="1"/><rect x="16" y="11" width="1" height="1"/><rect x="12" y="12" width="1" height="1"/><rect x="16" y="12" width="1" height="1"/><rect x="11" y="13" width="1" height="1"/><rect x="17" y="13" width="1" height="1"/><rect x="10" y="5" width="2" height="1"/><rect x="10" y="13" width="2" height="1"/></svg>
<div style="left:822px;top:507px;width:13px;height:13px;background:#ffffff;"></div>
<div style="left:822px;top:507px;width:13px;height:1px;background:#808080;"></div>
<div style="left:822px;top:507px;width:1px;height:13px;background:#808080;"></div>
<div style="left:823px;top:508px;width:11px;height:1px;background:#404040;"></div>
<div style="left:823px;top:508px;width:1px;height:11px;background:#404040;"></div>
<div style="left:822px;top:519px;width:13px;height:1px;background:#ffffff;"></div>
<div style="left:834px;top:507px;width:1px;height:13px;background:#ffffff;"></div>
<div style="left:823px;top:518px;width:11px;height:1px;background:#d4d0c8;"></div>
<div style="left:833px;top:508px;width:1px;height:11px;background:#d4d0c8;"></div>
<svg style="position:absolute;left:822px;top:507px" width="13" height="13" shape-rendering="crispEdges"><path d="M3 5h1v1h-1zM3 6h2v1h-2zM3 7h3v1h-3zM4 8h3v1h-3zM5 9h1v1h-1zM6 8h1v-1h1v-1h1v-1h1v-1h-1v1h-1v1h-1v1h-1z" fill="#000"/><path d="M4 6h1v3h-1zM5 7h1v3h-1zM6 6h1v3h-1zM7 5h1v3h-1zM8 4h1v3h-1zM9 3h1v3h-1zM3 5h1v3h-1z" fill="#000"/></svg>
<div style="left:822px;top:520px;width:13px;height:13px;background:#ffffff;"></div>
<div style="left:822px;top:520px;width:13px;height:1px;background:#808080;"></div>
<div style="left:822px;top:520px;width:1px;height:13px;background:#808080;"></div>
<div style="left:823px;top:521px;width:11px;height:1px;background:#404040;"></div>
<div style="left:823px;top:521px;width:1px;height:11px;background:#404040;"></div>
<div style="left:822px;top:532px;width:13px;height:1px;background:#ffffff;"></div>
<div style="left:834px;top:520px;width:1px;height:13px;background:#ffffff;"></div>
<div style="left:823px;top:531px;width:11px;height:1px;background:#d4d0c8;"></div>
<div style="left:833px;top:521px;width:1px;height:11px;background:#d4d0c8;"></div>
<svg style="position:absolute;left:822px;top:520px" width="13" height="13" shape-rendering="crispEdges"><path d="M3 5h1v1h-1zM3 6h2v1h-2zM3 7h3v1h-3zM4 8h3v1h-3zM5 9h1v1h-1zM6 8h1v-1h1v-1h1v-1h1v-1h-1v1h-1v1h-1v1h-1z" fill="#000"/><path d="M4 6h1v3h-1zM5 7h1v3h-1zM6 6h1v3h-1zM7 5h1v3h-1zM8 4h1v3h-1zM9 3h1v3h-1zM3 5h1v3h-1z" fill="#000"/></svg>
<div class="t" style="left:840px;top:508px;font-size:12px;line-height:13px;color:#000;white-space:pre;transform:scaleX(0.9167);transform-origin:0 0;">Подъем</div>
<div class="t" style="left:840px;top:521px;font-size:12px;line-height:13px;color:#000;white-space:pre;transform:scaleX(0.9167);transform-origin:0 0;">Сборка</div>
<div class="t" style="left:798px;top:541px;font-size:12px;line-height:13px;color:#000;white-space:pre;transform:scaleX(0.9167);transform-origin:0 0;">Валюта:</div>
<div class="t" style="left:846px;top:541px;font-size:12px;line-height:13px;color:#000080;white-space:pre;font-weight:bold;transform:scaleX(0.9);transform-origin:0 0;">руб.</div>
<div style="left:795px;top:561px;width:101px;height:1px;background:#808080;"></div>
<div style="left:796px;top:562px;width:99px;height:1px;background:#ffffff;"></div>
<div style="left:795px;top:561px;width:1px;height:24px;background:#808080;"></div>
<div style="left:796px;top:562px;width:1px;height:22px;background:#ffffff;"></div>
<div style="left:894px;top:561px;width:1px;height:23px;background:#808080;"></div>
<div style="left:895px;top:561px;width:1px;height:24px;background:#ffffff;"></div>
<div style="left:795px;top:583px;width:101px;height:1px;background:#808080;"></div>
<div style="left:795px;top:584px;width:101px;height:1px;background:#ffffff;"></div>
<div style="left:801px;top:555px;width:38px;height:10px;background:#d4d0c8;"></div>
<div class="t" style="left:803px;top:555px;font-size:12px;line-height:13px;color:#000;white-space:pre;transform:scaleX(0.9167);transform-origin:0 0;">Сумма</div>
<div class="t" style="left:692px;top:568px;font-size:12px;line-height:13px;color:#000080;white-space:pre;font-weight:bold;letter-spacing:0.5px;width:200.00px;text-align:right;">1'570.00</div>
<div class="t" style="left:720px;top:592px;font-size:12px;line-height:13px;color:#000;white-space:pre;transform:scaleX(0.9167);transform-origin:0 0;">Запрашивать:</div>
<div style="left:804px;top:588px;width:91px;height:20px;background:#ffffff;"></div>
<div style="left:804px;top:588px;width:91px;height:1px;background:#808080;"></div>
<div style="left:804px;top:588px;width:1px;height:20px;background:#808080;"></div>
<div style="left:805px;top:589px;width:89px;height:1px;background:#404040;"></div>
<div style="left:805px;top:589px;width:1px;height:18px;background:#404040;"></div>
<div style="left:804px;top:607px;width:91px;height:1px;background:#ffffff;"></div>
<div style="left:894px;top:588px;width:1px;height:20px;background:#ffffff;"></div>
<div style="left:805px;top:606px;width:89px;height:1px;background:#d4d0c8;"></div>
<div style="left:893px;top:589px;width:1px;height:18px;background:#d4d0c8;"></div>
<div style="left:878px;top:590px;width:15px;height:16px;background:#d4d0c8;"></div>
<div style="left:878px;top:590px;width:15px;height:1px;background:#ffffff;"></div>
<div style="left:878px;top:590px;width:1px;height:16px;background:#ffffff;"></div>
<div style="left:878px;top:605px;width:15px;height:1px;background:#404040;"></div>
<div style="left:892px;top:590px;width:1px;height:16px;background:#404040;"></div>
<div style="left:879px;top:604px;width:13px;height:1px;background:#808080;"></div>
<div style="left:891px;top:591px;width:1px;height:14px;background:#808080;"></div>
<svg style="left:878px;top:590px" width="15" height="16" shape-rendering="crispEdges"><path d="M4 6h7v1h-1v1h-1v1h-1v1h-1v-1h-1v-1h-1v-1h-1z" fill="#000"/></svg>
<div class="t" style="left:808px;top:592px;font-size:12px;line-height:13px;color:#000;white-space:pre;transform:scaleX(0.9167);transform-origin:0 0;">Кол.</div>
<div style="left:867px;top:74px;width:223px;height:34px;border:3px solid #e6342b;border-radius:5px;"></div>
<div style="left:876px;top:204px;width:199px;height:22px;border:3px solid #e6342b;border-radius:5px;"></div>
<div style="left:84px;top:435px;width:692px;height:36px;border:3px solid #e6342b;border-radius:5px;"></div>
<div style="left:819px;top:499px;width:74px;height:34px;border:3px solid #e6342b;border-radius:5px;"></div>
</body></html>
